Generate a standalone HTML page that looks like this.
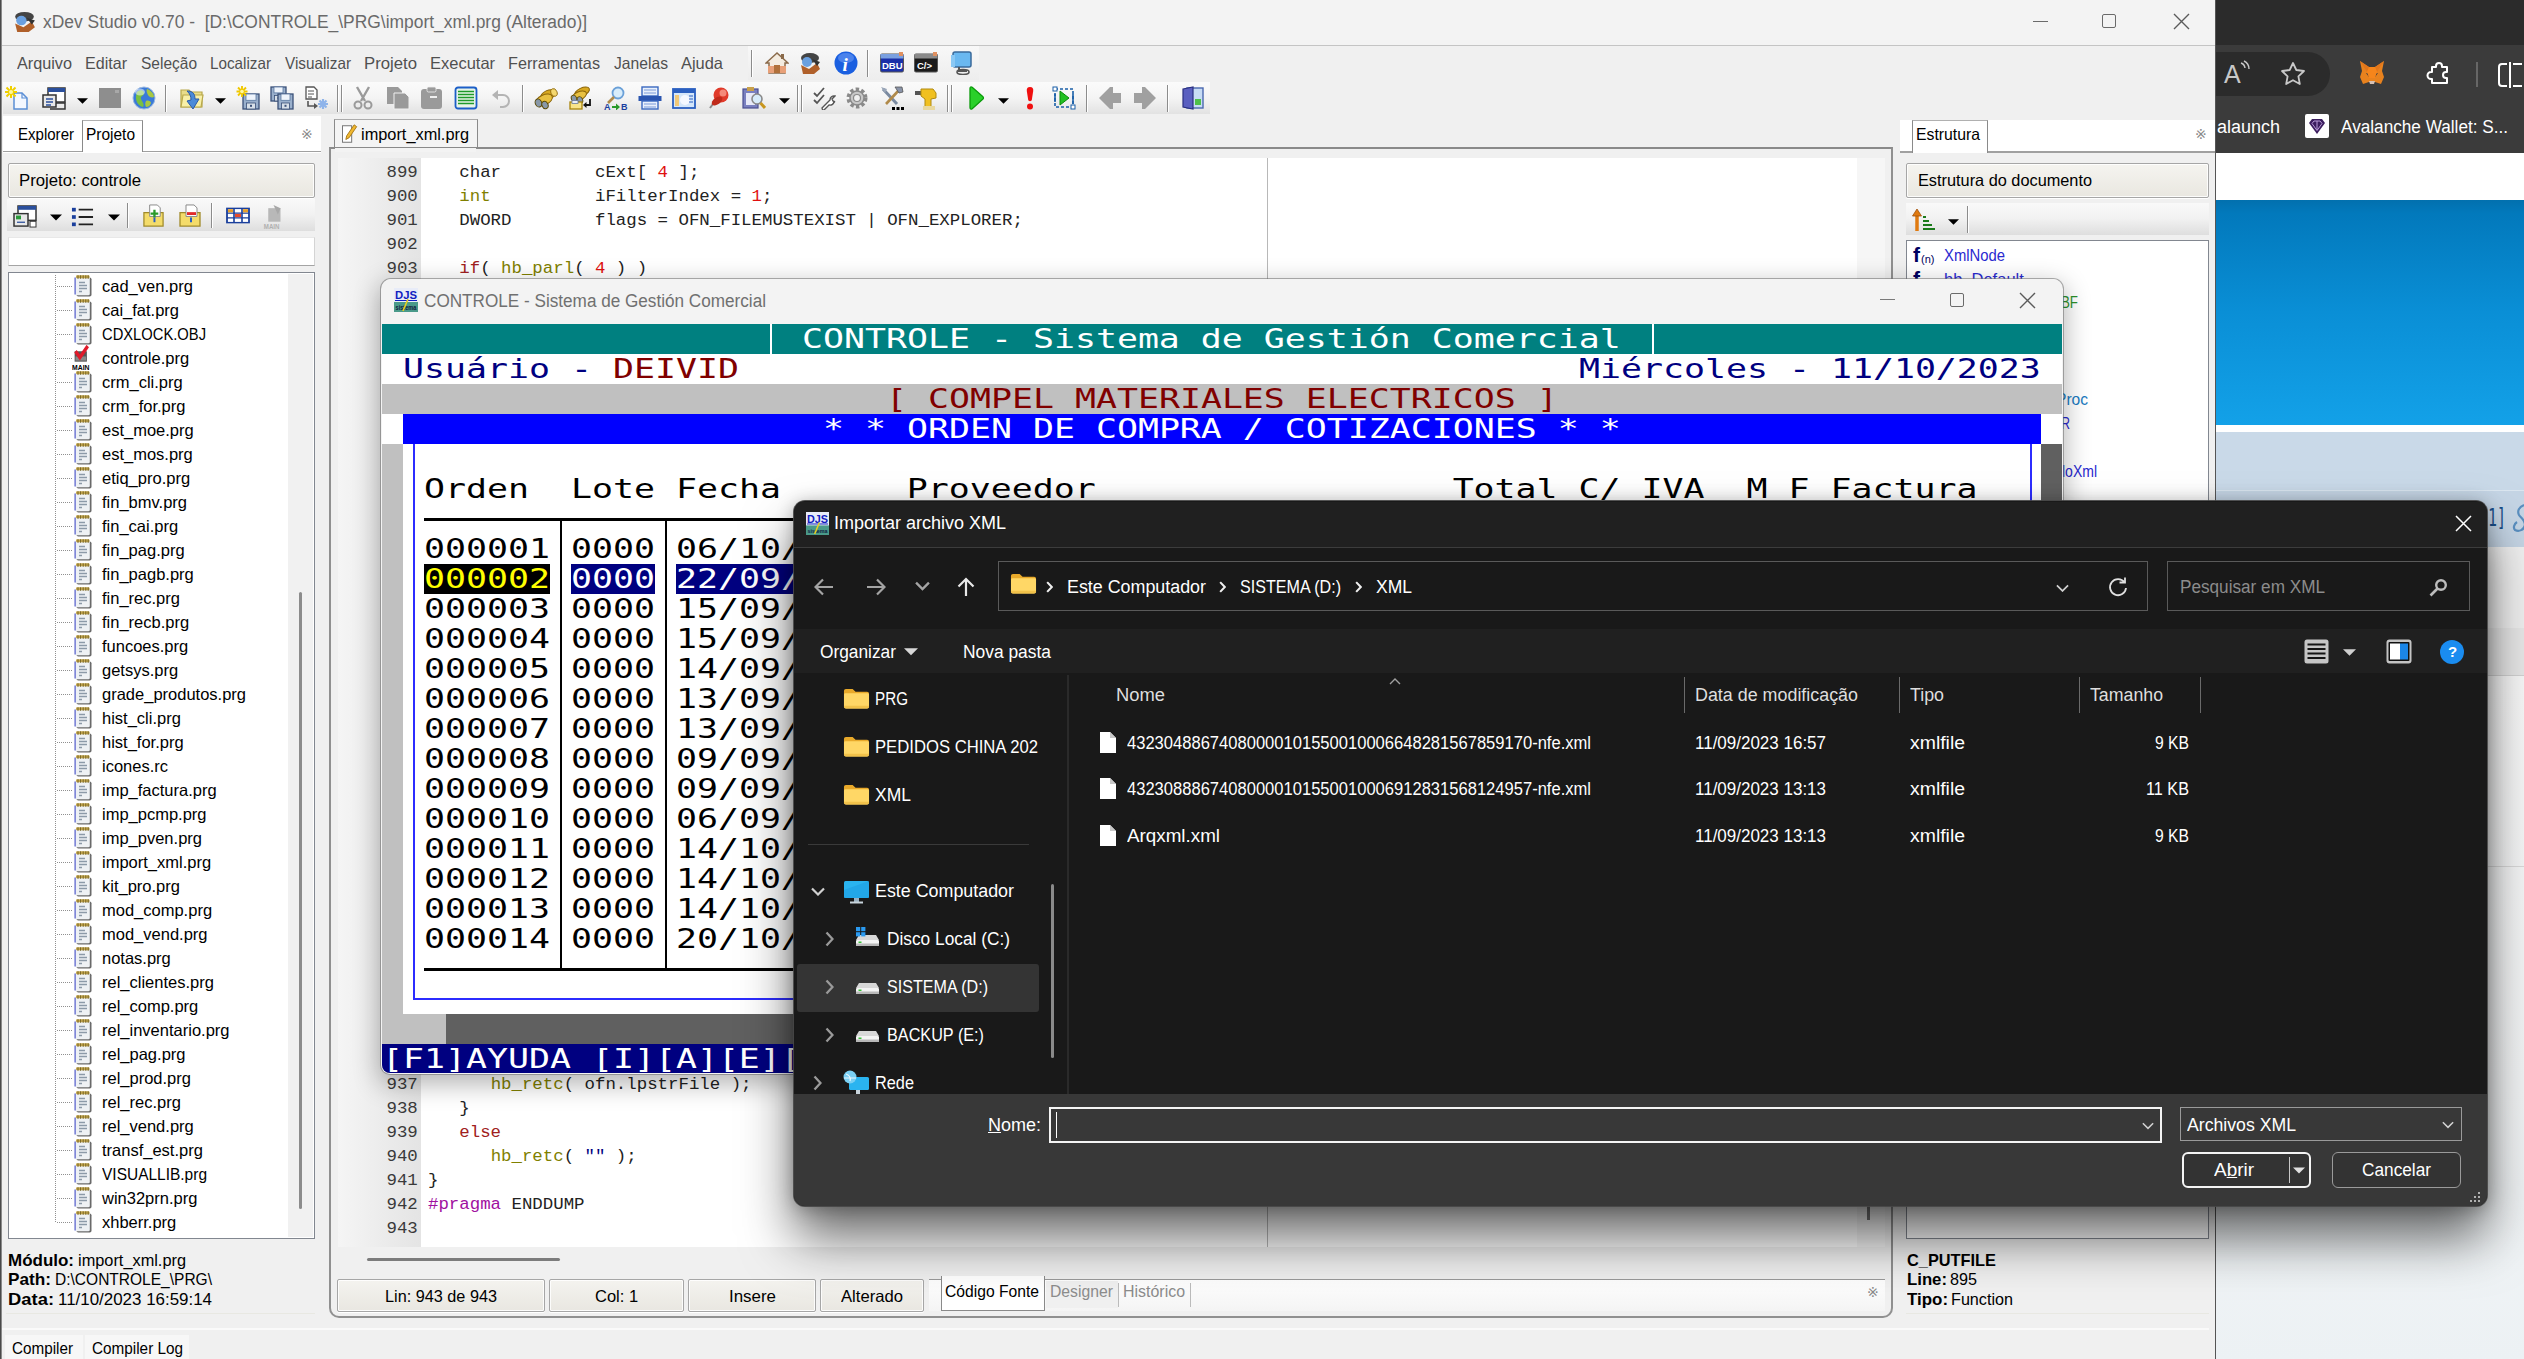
<!DOCTYPE html>
<html lang="pt"><head><meta charset="utf-8"><title>xDev Studio</title>
<style>
html,body{margin:0;padding:0;}
body{width:2524px;height:1359px;position:relative;overflow:hidden;background:#f0f0f0;}
div,span.t,svg.a{position:absolute;}
.t{white-space:nowrap;transform-origin:0 50%;}
.c{font:27.4px/30px "DejaVu Sans Mono",monospace;white-space:pre;transform-origin:0 0;height:30px;}
</style></head>
<body>
<div style="left:2216px;top:0px;width:308px;height:45px;background:#2b2b2b;"></div>
<div style="left:2216px;top:45px;width:308px;height:108px;background:#3b3b3b;"></div>
<div style="left:2176px;top:52px;width:154px;height:44px;background:#2b2b2b;border-radius:22px;"></div>
<div style="left:2216px;top:153px;width:308px;height:47px;background:#fff;"></div>
<div style="left:2216px;top:200px;width:308px;height:225px;background:linear-gradient(#0270ae 0%,#0279bc 6%,#0a8fd6 50%,#13a1e8 100%);"></div>
<div style="left:2216px;top:425px;width:308px;height:7px;background:#fff;"></div>
<div style="left:2216px;top:432px;width:308px;height:58px;background:#c9d9e8;"></div>
<div style="left:2216px;top:490px;width:308px;height:1px;background:#dbe6f0;"></div>
<div style="left:2216px;top:491px;width:308px;height:56px;background:#c5d5e5;"></div>
<div style="left:2216px;top:547px;width:308px;height:81px;background:#f1f1f1;"></div>
<div style="left:2216px;top:628px;width:308px;height:47px;background:#e9e9e9;"></div>
<div style="left:2216px;top:675px;width:308px;height:1px;background:#d4d4d4;"></div>
<div style="left:2216px;top:676px;width:308px;height:684px;background:linear-gradient(#fafafa 0%,#f4f6f7 60%,#ecf1f4 100%);"></div>
<div style="left:2216px;top:866px;width:308px;height:1px;background:#dcdcdc;"></div>
<span class="t" style="left:2224px;top:58.0px;font:25px/32px 'Liberation Sans',sans-serif;color:#c8c8c8;">A</span>
<svg class="a" style="left:2240px;top:60px" width="12" height="14" viewBox="0 0 12 14"><path d="M1 3a6 6 0 0 1 4 5M4 1a9 9 0 0 1 5 8" stroke="#c8c8c8" stroke-width="1.4" fill="none"/></svg>
<svg class="a" style="left:2279px;top:60px" width="28" height="28" viewBox="0 0 28 28"><path d="M14 3l3.3 7 7.7 1-5.6 5.3 1.4 7.7-6.8-3.8-6.8 3.8 1.4-7.700-5.600-5.300 7.700-1z" stroke="#c8c8c8" stroke-width="1.8" fill="none" stroke-linejoin="round"/></svg>
<svg class="a" style="left:2358px;top:60px" width="28" height="27" viewBox="0 0 28 27"><path d="M2 1l9 6h6l9-6-2 10 2 6-3 7-6-2h-6l-6 2-3-7 2-6z" fill="#e8821e"/><path d="M8 13l4 1-1 3zM20 13l-4 1 1 3z" fill="#233447"/><path d="M11 21h6l-1 3h-4z" fill="#d6c0b3"/><path d="M2 1l9 6-2 5zM26 1l-9 6 2 5z" fill="#e2761b"/><path d="M9 12l2-5h6l2 5-2 6h-6z" fill="#f6851b"/></svg>
<svg class="a" style="left:2425px;top:60px" width="28" height="28" viewBox="0 0 28 28"><path d="M11 6a3 3 0 0 1 6 0v1h5v5h-1a3 3 0 0 0 0 6h1v5h-15v-4h-1a3.500 3.500 0 0 1 0-7h1v-5h4z" stroke="#fff" stroke-width="2" fill="none" stroke-linejoin="round"/></svg>
<div style="left:2476px;top:62px;width:2px;height:25px;background:#666;"></div>
<svg class="a" style="left:2497px;top:62px" width="28" height="26" viewBox="0 0 28 26"><path d="M10 2h-5a3 3 0 0 0-3 3v16a3 3 0 0 0 3 3h5M16 2h9M16 24h9" stroke="#fff" stroke-width="2" fill="none"/><path d="M13 0v26" stroke="#fff" stroke-width="2"/></svg>
<span class="t" style="left:2217px;top:115.5px;font:18px/23px 'Liberation Sans',sans-serif;color:#fff;">alaunch</span>
<div style="left:2305px;top:114px;width:24px;height:24px;background:#fff;border-radius:2px;"></div>
<svg class="a" style="left:2308px;top:117px" width="18" height="18" viewBox="0 0 18 18"><path d="M4 2h10l3 4-8 11-8-11z" fill="#3b1d5e"/><path d="M6 4h6l2 2.500-5 7-5-7z" fill="none" stroke="#b79ad6" stroke-width="1"/><path d="M9 4v9" stroke="#b79ad6" stroke-width="1"/></svg>
<span class="t" style="left:2341px;top:115.5px;font:18px/23px 'Liberation Sans',sans-serif;color:#fff;transform:scaleX(0.9538);">Avalanche Wallet: S...</span>
<span class="t" style="left:2488px;top:502.5px;font:24px/31px 'DejaVu Sans Mono',monospace;color:#1a4f8a;transform:scaleX(0.6229);">1]</span>
<svg class="a" style="left:2512px;top:503px" width="14" height="32" viewBox="0 0 14 32"><path d="M12 2c-5 2-7 6-5 10 2 3 6 5 6 10-1 5-6 7-10 5 -2-2-1-6 2-8" stroke="#5a8fc0" stroke-width="2.200" fill="none"/></svg>
<div style="left:0px;top:0px;width:2216px;height:1359px;background:#f0f0f0;"></div>
<div style="left:0px;top:0px;width:2216px;height:45px;background:#f3f3f3;"></div>
<div style="left:0px;top:45px;width:2216px;height:1px;background:#c4c4c4;"></div>
<div style="left:0px;top:0px;width:2px;height:1359px;background:linear-gradient(90deg,#4a4a4a 0 1px,#8a8a8a 1px 2px);"></div>
<div style="left:2215px;top:0px;width:1px;height:1359px;background:#555;"></div>
<svg class="a" style="left:12px;top:10px" width="25" height="23" viewBox="0 0 24 24" preserveAspectRatio="none"><ellipse cx="12" cy="7" rx="9" ry="5" fill="#444"/><circle cx="9" cy="11" r="5" fill="#6aa0e0"/><path d="M3 14l8 4 8-6 3 6-6 5H5z" fill="#b0602a"/><path d="M14 8l8 3-3 4z" fill="#333"/></svg>
<span class="t" style="left:43px;top:10.5px;font:18px/23px 'Liberation Sans',sans-serif;color:#6a6a6a;transform:scaleX(0.9677);white-space:pre;">xDev Studio v0.70 -  [D:\CONTROLE_\PRG\import_xml.prg (Alterado)]</span>
<div style="left:2033px;top:21px;width:15px;height:1px;background:#6a6a6a;"></div>
<div style="left:2102px;top:14px;width:14px;height:14px;box-sizing:border-box;border:1.4px solid #6a6a6a;border-radius:2px;"></div>
<svg class="a" style="left:2173px;top:13px" width="17" height="17" viewBox="0 0 17 17" preserveAspectRatio="none"><path d="M1 1l15 15M16 1L1 16" stroke="#5a5a5a" stroke-width="1.400"/></svg>
<span class="t" style="left:17px;top:52.5px;font:16.5px/21px 'Liberation Sans',sans-serif;color:#505050;transform:scaleX(0.9831);">Arquivo</span>
<span class="t" style="left:85px;top:52.5px;font:16.5px/21px 'Liberation Sans',sans-serif;color:#505050;transform:scaleX(0.9745);">Editar</span>
<span class="t" style="left:141px;top:52.5px;font:16.5px/21px 'Liberation Sans',sans-serif;color:#505050;transform:scaleX(0.9392);">Seleção</span>
<span class="t" style="left:210px;top:52.5px;font:16.5px/21px 'Liberation Sans',sans-serif;color:#505050;transform:scaleX(0.9238);">Localizar</span>
<span class="t" style="left:285px;top:52.5px;font:16.5px/21px 'Liberation Sans',sans-serif;color:#505050;transform:scaleX(0.9266);">Visualizar</span>
<span class="t" style="left:364px;top:52.5px;font:16.5px/21px 'Liberation Sans',sans-serif;color:#505050;transform:scaleX(1.0138);">Projeto</span>
<span class="t" style="left:430px;top:52.5px;font:16.5px/21px 'Liberation Sans',sans-serif;color:#505050;">Executar</span>
<span class="t" style="left:508px;top:52.5px;font:16.5px/21px 'Liberation Sans',sans-serif;color:#505050;transform:scaleX(0.9837);">Ferramentas</span>
<span class="t" style="left:614px;top:52.5px;font:16.5px/21px 'Liberation Sans',sans-serif;color:#505050;transform:scaleX(0.9496);">Janelas</span>
<span class="t" style="left:681px;top:52.5px;font:16.5px/21px 'Liberation Sans',sans-serif;color:#505050;transform:scaleX(0.9953);">Ajuda</span>
<div style="left:748px;top:46px;width:231px;height:34px;background:linear-gradient(#f8f8f8,#ededed);"></div>
<div style="left:751px;top:50px;width:1px;height:27px;background:#8c8c8c;"></div>
<div style="left:752px;top:50px;width:1px;height:27px;background:#fff;"></div>
<svg class="a" style="left:765px;top:51px" width="24" height="24" viewBox="0 0 24 24" preserveAspectRatio="none"><path d="M12 2L1 12h3v10h16V12h3z" fill="#f4ece0" stroke="#8a6a4a" stroke-width="1.500"/><rect x="3" y="15" width="18" height="7" fill="#e8a078"/><path d="M9 22v-8h6v8" fill="#b0703a"/><rect x="16" y="3" width="3" height="5" fill="#8a6a4a"/></svg>
<svg class="a" style="left:798px;top:51px" width="24" height="24" viewBox="0 0 24 24" preserveAspectRatio="none"><ellipse cx="12" cy="7" rx="9" ry="5" fill="#444"/><circle cx="9" cy="11" r="5" fill="#6aa0e0"/><path d="M3 14l8 4 8-6 3 6-6 5H5z" fill="#b0602a"/><path d="M14 8l8 3-3 4z" fill="#333"/></svg>
<svg class="a" style="left:834px;top:51px" width="24" height="24" viewBox="0 0 24 24" preserveAspectRatio="none"><circle cx="12" cy="12" r="11.500" fill="#1a5fe0"/><ellipse cx="12" cy="7" rx="8" ry="5" fill="#6a9af4" opacity=".6"/><text x="8.500" y="19.500" font-family="Liberation Serif,serif" font-style="italic" font-weight="bold" font-size="19" fill="#fff">i</text></svg>
<div style="left:867px;top:50px;width:1px;height:27px;background:#8c8c8c;"></div>
<div style="left:868px;top:50px;width:1px;height:27px;background:#fff;"></div>
<svg class="a" style="left:880px;top:51px" width="24" height="24" viewBox="0 0 24 24" preserveAspectRatio="none"><rect x="0.500" y="3" width="23" height="18" rx="1.500" fill="#1a2fa8" stroke="#555" stroke-width="1"/><rect x="0.500" y="3" width="23" height="4.500" fill="#7aa0e0"/><rect x="19" y="1" width="4" height="4" fill="#e09060"/><text x="2" y="18" font-family="Liberation Sans,sans-serif" font-weight="bold" font-size="9.500" fill="#fff">DBU</text></svg>
<svg class="a" style="left:914px;top:51px" width="24" height="24" viewBox="0 0 24 24" preserveAspectRatio="none"><rect x="0.500" y="3" width="23" height="18" rx="1.500" fill="#1a1a1a" stroke="#555" stroke-width="1"/><rect x="0.500" y="3" width="23" height="4.500" fill="#8a8a8a"/><rect x="19" y="1" width="4" height="4" fill="#e09060"/><text x="3" y="18" font-family="Liberation Sans,sans-serif" font-weight="bold" font-size="9.500" fill="#fff">C/&gt;</text></svg>
<svg class="a" style="left:950px;top:51px" width="24" height="24" viewBox="0 0 24 24" preserveAspectRatio="none"><rect x="3" y="1" width="18" height="15" rx="2" fill="#6ab8f0" stroke="#3a6a9a" stroke-width="1.500"/><rect x="1" y="4" width="4" height="12" fill="#8ac8f4"/><path d="M9 16v4h8" fill="none" stroke="#555" stroke-width="2"/><ellipse cx="13" cy="21" rx="6" ry="2.500" fill="none" stroke="#555" stroke-width="1.600"/></svg>
<div style="left:3px;top:82px;width:1207px;height:32px;background:linear-gradient(#fbfbfb,#f4f4f4 50%,#e2e2e2);"></div>
<svg class="a" style="left:5px;top:86px" width="24" height="24" viewBox="0 0 24 24" preserveAspectRatio="none"><path d="M9 7h8l5 5v11H9z" fill="#f4f8ff" stroke="#5b8fd5" stroke-width="1.500"/><path d="M17 7v5h5" fill="none" stroke="#5b8fd5" stroke-width="1.200"/><path d="M6 0v12M0 6h12M1.500 1.500l9 9M10.500 1.500l-9 9" stroke="#f0d000" stroke-width="2"/><circle cx="6" cy="6" r="2" fill="#fff8a0"/></svg>
<svg class="a" style="left:42px;top:86px" width="24" height="24" viewBox="0 0 24 24" preserveAspectRatio="none"><rect x="6" y="2" width="17" height="14" fill="#fff" stroke="#333" stroke-width="1.5"/><rect x="6" y="2" width="17" height="4" fill="#2a4f9c"/><rect x="1" y="9" width="13" height="12" fill="#e8e8e8" stroke="#333" stroke-width="1.5"/><path d="M4 13h7M4 16h7M4 19h5" stroke="#2a4f9c" stroke-width="1.3"/><path d="M14 17h9v6H8" fill="none" stroke="#333" stroke-width="1.5"/></svg>
<svg class="a" style="left:98px;top:86px" width="24" height="24" viewBox="0 0 24 24" preserveAspectRatio="none"><rect x="1" y="2" width="22" height="20" fill="#8e8e8e"/><rect x="17" y="4" width="4" height="3" fill="#a8a8a8"/></svg>
<svg class="a" style="left:132px;top:86px" width="24" height="24" viewBox="0 0 24 24" preserveAspectRatio="none"><circle cx="12" cy="12" r="11" fill="#3a7ad8"/><circle cx="12" cy="12" r="11" fill="none" stroke="#9ab8e0" stroke-width="1"/><path d="M5 6c3-3 7-2 7 1s-4 3-3 6 4 5 2 8c-5-1-9-7-6-15z" fill="#7ac040"/><path d="M15 3c3 1 7 4 7 8-2 1-5 0-6-2s-2-4-1-6zM14 15c2-1 5 0 5 2-1 3-3 4-5 4-1-2-1-4 0-6z" fill="#a8c840"/><ellipse cx="8" cy="6" rx="5" ry="3.500" fill="#fff" opacity=".5"/></svg>
<svg class="a" style="left:180px;top:86px" width="24" height="24" viewBox="0 0 24 24" preserveAspectRatio="none"><path d="M1 4h8l2 2h11v15H1z" fill="#e8dc8a" stroke="#b8a84a" stroke-width="1.200"/><path d="M3 9h20l-2 12H1z" fill="#f8f0a8" stroke="#b8a84a" stroke-width="1.200"/><path d="M7 5c6 0 8 3 8 8h4l-6 10-6-8 4-1c0-4-1-6-4-9z" fill="#4a8ad8" stroke="#2a5aa8" stroke-width="1"/></svg>
<svg class="a" style="left:236px;top:86px" width="24" height="24" viewBox="0 0 24 24" preserveAspectRatio="none"><rect x="7" y="8" width="16" height="15" fill="#9ab0cc" stroke="#3a5078" stroke-width="1.300"/><rect x="10" y="8" width="10" height="6.3" fill="#eef4fc" stroke="#5a78a0" stroke-width=".8"/><rect x="10.5" y="17.0" width="9" height="6.0" fill="#d8e0e8" stroke="#3a5078" stroke-width=".8"/><rect x="14.0" y="18.799999999999997" width="2" height="2" fill="#3a5078"/><path d="M6 0v11M0.500 5.500h11M2 1.500l8 8M10 1.500l-8 8" stroke="#f0c800" stroke-width="1.900"/><circle cx="6" cy="5.500" r="1.800" fill="#fff8a0"/></svg>
<svg class="a" style="left:270px;top:86px" width="24" height="24" viewBox="0 0 24 24" preserveAspectRatio="none"><rect x="1" y="1" width="15" height="14" fill="#9ab0cc" stroke="#3a5078" stroke-width="1.300"/><rect x="4" y="1" width="9" height="5.88" fill="#eef4fc" stroke="#5a78a0" stroke-width=".8"/><rect x="4.5" y="9.4" width="8" height="5.6000000000000005" fill="#d8e0e8" stroke="#3a5078" stroke-width=".8"/><rect x="7.5" y="11.08" width="2" height="2" fill="#3a5078"/><rect x="8" y="8" width="15" height="15" fill="#9ab0cc" stroke="#3a5078" stroke-width="1.300"/><rect x="11" y="8" width="9" height="6.3" fill="#eef4fc" stroke="#5a78a0" stroke-width=".8"/><rect x="11.5" y="17.0" width="8" height="6.0" fill="#d8e0e8" stroke="#3a5078" stroke-width=".8"/><rect x="14.5" y="18.799999999999997" width="2" height="2" fill="#3a5078"/></svg>
<svg class="a" style="left:304px;top:86px" width="24" height="24" viewBox="0 0 24 24" preserveAspectRatio="none"><path d="M2 1h8l3 3v9H2z" fill="#fff" stroke="#555" stroke-width="1.3"/><path d="M4 5h6M4 8h6M4 11h4" stroke="#555" stroke-width="1"/><path d="M4 15v5h7" fill="none" stroke="#555" stroke-width="1.6"/><path d="M10 17l4 3-4 3z" fill="#555"/><path d="M19 13v10M14 18h10M15.500 14.500l7 7M22.500 14.500l-7 7" stroke="#8fb4ea" stroke-width="2.2"/></svg>
<svg class="a" style="left:351px;top:86px" width="24" height="24" viewBox="0 0 24 24" preserveAspectRatio="none"><path d="M6 1l8 14M18 1l-8 14" stroke="#9a9a9a" stroke-width="2.4"/><circle cx="7" cy="19" r="3.500" fill="none" stroke="#9a9a9a" stroke-width="2"/><circle cx="17" cy="19" r="3.500" fill="none" stroke="#9a9a9a" stroke-width="2"/></svg>
<svg class="a" style="left:386px;top:86px" width="24" height="24" viewBox="0 0 24 24" preserveAspectRatio="none"><path d="M1 1h11l4 4v13H1z" fill="#9a9a9a"/><path d="M8 7h11l4 4v12H8z" fill="#9a9a9a" stroke="#f0f0f0" stroke-width="1"/></svg>
<svg class="a" style="left:420px;top:86px" width="24" height="24" viewBox="0 0 24 24" preserveAspectRatio="none"><rect x="1" y="3" width="21" height="20" rx="3" fill="#9a9a9a"/><rect x="7" y="1" width="9" height="5" rx="1.500" fill="#9a9a9a" stroke="#f0f0f0" stroke-width=".8"/><path d="M10 11h7" stroke="#f0f0f0" stroke-width="2"/></svg>
<svg class="a" style="left:454px;top:86px" width="24" height="24" viewBox="0 0 24 24" preserveAspectRatio="none"><rect x="1.500" y="1.500" width="21" height="21" rx="2.500" fill="#e8f4e8" stroke="#1c5fc8" stroke-width="1.800"/><path d="M4 5.500h16M4 8.500h16M4 11.500h16M4 14.500h16M4 17.500h16" stroke="#1f9a2a" stroke-width="1.700"/></svg>
<svg class="a" style="left:489px;top:86px" width="24" height="24" viewBox="0 0 24 24" preserveAspectRatio="none"><path d="M5 9h9a6 6 0 0 1 0 12h-3" fill="none" stroke="#b4b4b4" stroke-width="2"/><path d="M9 4L3 9l6 5z" fill="#b4b4b4"/></svg>
<svg class="a" style="left:534px;top:86px" width="24" height="24" viewBox="0 0 24 24" preserveAspectRatio="none"><ellipse cx="14" cy="9" rx="8" ry="4.500" transform="rotate(-25 14 9)" fill="#d8a820" stroke="#8a6408" stroke-width="1"/><ellipse cx="10" cy="14" rx="9" ry="5" transform="rotate(-25 10 14)" fill="#e8c040" stroke="#8a6408" stroke-width="1"/><ellipse cx="20" cy="6.500" rx="3" ry="4" transform="rotate(-25 20 6.500)" fill="#f4d870" stroke="#8a6408" stroke-width=".8"/><ellipse cx="4.500" cy="17" rx="3.200" ry="4.200" transform="rotate(-25 4.500 17)" fill="#8898a8" stroke="#5a4a08" stroke-width="1"/><ellipse cx="11" cy="19" rx="3" ry="3.800" transform="rotate(-25 11 19)" fill="#8898a8" stroke="#5a4a08" stroke-width="1"/></svg>
<svg class="a" style="left:568px;top:86px" width="24" height="24" viewBox="0 0 24 24" preserveAspectRatio="none"><ellipse cx="14" cy="6" rx="8" ry="4" transform="rotate(-25 14 6)" fill="#d8a820" stroke="#8a6408" stroke-width="1"/><ellipse cx="11" cy="10" rx="8" ry="4.200" transform="rotate(-25 11 10)" fill="#e8c040" stroke="#8a6408" stroke-width="1"/><ellipse cx="6" cy="12.500" rx="2.600" ry="3.400" transform="rotate(-25 6 12.500)" fill="#8898a8" stroke="#5a4a08" stroke-width=".9"/><ellipse cx="12" cy="14" rx="2.600" ry="3.400" transform="rotate(-25 12 14)" fill="#8898a8" stroke="#5a4a08" stroke-width=".9"/><rect x="2" y="16" width="12" height="7" fill="#f8e48a" stroke="#a8840a" stroke-width="1.300"/><rect x="4" y="14.500" width="6" height="3" fill="#e8eef8" stroke="#6a7a9a" stroke-width=".8"/><path d="M22 13v6h-5" fill="none" stroke="#111" stroke-width="1.800"/><path d="M18.500 16l-3.500 3 3.500 3z" fill="#111"/></svg>
<svg class="a" style="left:604px;top:86px" width="24" height="24" viewBox="0 0 24 24" preserveAspectRatio="none"><circle cx="14" cy="7" r="5.500" fill="#d8ecfa" stroke="#6aa0d8" stroke-width="1.800"/><path d="M10 11l-6 6" stroke="#b08a4a" stroke-width="2.600"/><text x="0" y="24" font-family="Liberation Sans,sans-serif" font-weight="bold" font-size="9" fill="#1a3fa0">A</text><text x="17" y="24" font-family="Liberation Sans,sans-serif" font-weight="bold" font-size="9" fill="#1a3fa0">B</text><path d="M8 20h4v-2.500l4 3.500-4 3.500V22H8z" fill="#2a9a2a"/></svg>
<svg class="a" style="left:638px;top:86px" width="24" height="24" viewBox="0 0 24 24" preserveAspectRatio="none"><rect x="4" y="1" width="16" height="9" fill="#e8f0fc" stroke="#3a68c0" stroke-width="1.400"/><path d="M6 4h12M6 7h12" stroke="#7a9ad8" stroke-width="1"/><rect x="0.500" y="10" width="23" height="5" fill="#2a55b0"/><rect x="4" y="15" width="16" height="8" fill="#e8f0fc" stroke="#3a68c0" stroke-width="1.400"/><path d="M6 18h12M6 21h12" stroke="#7a9ad8" stroke-width="1"/></svg>
<svg class="a" style="left:672px;top:86px" width="24" height="24" viewBox="0 0 24 24" preserveAspectRatio="none"><rect x="1" y="3" width="22" height="19" fill="#d4e6fa" stroke="#2a5fc0" stroke-width="1.800"/><rect x="1" y="3" width="22" height="4" fill="#2a5fc0"/><circle cx="13" cy="14" r="5" fill="#f4f8ff"/><rect x="3" y="9" width="4" height="11" fill="#f0c878"/><path d="M17 10h4M17 13h4M17 16h4" stroke="#2a5fc0" stroke-width="1.200"/></svg>
<svg class="a" style="left:707px;top:86px" width="24" height="24" viewBox="0 0 24 24" preserveAspectRatio="none"><circle cx="14" cy="9" r="7.500" fill="#e03a2a"/><circle cx="16" cy="7" r="3.500" fill="#f48a7a"/><path d="M9 14l-6 8" stroke="#8a8a8a" stroke-width="2"/><ellipse cx="10" cy="15" rx="6" ry="3.500" transform="rotate(-35 10 15)" fill="#c02a1a"/></svg>
<svg class="a" style="left:742px;top:86px" width="24" height="24" viewBox="0 0 24 24" preserveAspectRatio="none"><rect x="1" y="3" width="15" height="19" fill="#7a80c0" stroke="#4a4f90" stroke-width="1.200"/><rect x="5" y="1" width="7" height="4" fill="#c8a04a"/><rect x="4" y="7" width="9" height="12" fill="#e8eaf8"/><circle cx="15" cy="13" r="5" fill="#d8ecfa" stroke="#8a8a8a" stroke-width="1.600"/><path d="M18.500 17l4.500 5" stroke="#c8961e" stroke-width="3"/></svg>
<svg class="a" style="left:812px;top:86px" width="24" height="24" viewBox="0 0 24 24" preserveAspectRatio="none"><path d="M2 7l3 3 7-8M2 14l3 3 7-8" fill="none" stroke="#555" stroke-width="1.800"/><path d="M10 22l8-8a4 4 0 0 1 5-4l-3 3 1 2 2 1 -1 0a4 4 0 0 1-5 3l-6 6z" fill="#fff" stroke="#555" stroke-width="1.400"/></svg>
<svg class="a" style="left:845px;top:86px" width="24" height="24" viewBox="0 0 24 24" preserveAspectRatio="none"><circle cx="12" cy="12" r="8.500" fill="none" stroke="#8a8a8a" stroke-width="4" stroke-dasharray="3.300 2.200"/><circle cx="12" cy="12" r="7" fill="#c8c8c8" stroke="#8a8a8a" stroke-width="1.500"/><circle cx="12" cy="12" r="3.500" fill="#f0f0f0" stroke="#8a8a8a" stroke-width="1.200"/></svg>
<svg class="a" style="left:880px;top:86px" width="24" height="24" viewBox="0 0 24 24" preserveAspectRatio="none"><path d="M3 3l14 15" stroke="#7a8aa0" stroke-width="3"/><path d="M1 1l6 2-2 4z" fill="#9aa6b8"/><path d="M20 3L6 18" stroke="#b08a4a" stroke-width="2.600"/><path d="M15 1h7l1 5-4 1z" fill="#8a94a8" stroke="#555" stroke-width=".8"/><rect x="12" y="21" width="3" height="3" fill="#000"/><rect x="16.500" y="21" width="3" height="3" fill="#000"/><rect x="21" y="21" width="3" height="3" fill="#000"/></svg>
<svg class="a" style="left:914px;top:86px" width="24" height="24" viewBox="0 0 24 24" preserveAspectRatio="none"><path d="M1 5h6v4H1z" fill="#555"/><path d="M7 3h12l3 4v5l-5 1v9h-6v-9l-4-3z" fill="#f0c020" stroke="#b08a10" stroke-width="1"/><rect x="9" y="20" width="12" height="4" fill="#e8d8a0"/></svg>
<svg class="a" style="left:964px;top:86px" width="24" height="24" viewBox="0 0 24 24" preserveAspectRatio="none"><path d="M6 2.500c0-1.500 1-2 2.200-1.200l10.500 9.200c1 .8 1 2 0 2.800L8.200 22.700C7 23.500 6 23 6 21.500z" fill="#2ad02a" stroke="#0a9a0a" stroke-width="1.300"/></svg>
<svg class="a" style="left:1018px;top:86px" width="24" height="24" viewBox="0 0 24 24" preserveAspectRatio="none"><path d="M12 1c2.500 0 3.500 1.500 3.200 4l-1.400 9c-.3 1.500-3.300 1.500-3.600 0L8.800 5C8.500 2.500 9.500 1 12 1z" fill="#f01010"/><circle cx="12" cy="20.500" r="3" fill="#f01010"/></svg>
<svg class="a" style="left:1052px;top:86px" width="24" height="24" viewBox="0 0 24 24" preserveAspectRatio="none"><rect x="3" y="3" width="18" height="18" fill="none" stroke="#1a5fa8" stroke-width="1.600" stroke-dasharray="3 2"/><rect x="1" y="1" width="4" height="4" fill="#fff" stroke="#1a5fa8"/><rect x="19" y="19" width="4" height="4" fill="#fff" stroke="#1a5fa8"/><path d="M8 5l9 7-9 7z" fill="#22c022" stroke="#0a8a0a" stroke-width="1"/><path d="M3 8v8M21 8v10" stroke="#1a5fa8" stroke-width="1.600"/></svg>
<svg class="a" style="left:1098px;top:86px" width="24" height="24" viewBox="0 0 24 24" preserveAspectRatio="none"><path d="M1 12L12 1h3v6h8v10h-8v6h-3z" fill="#a0a0a0"/></svg>
<svg class="a" style="left:1133px;top:86px" width="24" height="24" viewBox="0 0 24 24" preserveAspectRatio="none"><path d="M23 12L12 1H9v6H1v10h8v6h3z" fill="#a0a0a0"/></svg>
<svg class="a" style="left:1181px;top:86px" width="24" height="24" viewBox="0 0 24 24" preserveAspectRatio="none"><rect x="6" y="2" width="16" height="20" fill="#c8dcf4" stroke="#4a68b0" stroke-width="1.400"/><rect x="14" y="13" width="6" height="6" fill="#4fc04a"/><path d="M2 3l10-2v22l-10-2z" fill="#5a5fc0" stroke="#2a2f80" stroke-width="1.200"/></svg>
<svg class="a" style="left:77px;top:98px" width="11" height="6" viewBox="0 0 10 5"><path d="M0 0h10l-5 5z" fill="#000"/></svg>
<svg class="a" style="left:215px;top:98px" width="11" height="6" viewBox="0 0 10 5"><path d="M0 0h10l-5 5z" fill="#000"/></svg>
<svg class="a" style="left:779px;top:98px" width="11" height="6" viewBox="0 0 10 5"><path d="M0 0h10l-5 5z" fill="#000"/></svg>
<svg class="a" style="left:998px;top:98px" width="11" height="6" viewBox="0 0 10 5"><path d="M0 0h10l-5 5z" fill="#000"/></svg>
<div style="left:165px;top:85px;width:1px;height:27px;background:#8c8c8c;"></div>
<div style="left:166px;top:85px;width:1px;height:27px;background:#fff;"></div>
<div style="left:522px;top:85px;width:1px;height:27px;background:#8c8c8c;"></div>
<div style="left:523px;top:85px;width:1px;height:27px;background:#fff;"></div>
<div style="left:1086px;top:85px;width:1px;height:27px;background:#8c8c8c;"></div>
<div style="left:1087px;top:85px;width:1px;height:27px;background:#fff;"></div>
<div style="left:1167px;top:85px;width:1px;height:27px;background:#8c8c8c;"></div>
<div style="left:1168px;top:85px;width:1px;height:27px;background:#fff;"></div>
<div style="left:337px;top:85px;width:1px;height:27px;background:#8c8c8c;"></div>
<div style="left:338px;top:85px;width:1px;height:27px;background:#fff;"></div>
<div style="left:341px;top:85px;width:1px;height:27px;background:#8c8c8c;"></div>
<div style="left:342px;top:85px;width:1px;height:27px;background:#fff;"></div>
<div style="left:797px;top:85px;width:1px;height:27px;background:#8c8c8c;"></div>
<div style="left:798px;top:85px;width:1px;height:27px;background:#fff;"></div>
<div style="left:801px;top:85px;width:1px;height:27px;background:#8c8c8c;"></div>
<div style="left:802px;top:85px;width:1px;height:27px;background:#fff;"></div>
<div style="left:947px;top:85px;width:1px;height:27px;background:#8c8c8c;"></div>
<div style="left:948px;top:85px;width:1px;height:27px;background:#fff;"></div>
<div style="left:951px;top:85px;width:1px;height:27px;background:#8c8c8c;"></div>
<div style="left:952px;top:85px;width:1px;height:27px;background:#fff;"></div>
<div style="left:3px;top:116px;width:318px;height:35px;background:#fff;"></div>
<div style="left:3px;top:151px;width:318px;height:2px;background:#a0a0a0;"></div>
<div style="left:82px;top:120px;width:61px;height:33px;background:#fff;box-sizing:border-box;border:1.5px solid #8a8a8a;border-top-color:#b0b0b0;border-bottom:none;"></div>
<div style="left:84px;top:150px;width:58px;height:3px;background:#fff;"></div>
<div style="left:3px;top:152px;width:318px;height:1px;background:#fff;"></div>
<span class="t" style="left:18px;top:123.5px;font:16.5px/21px 'Liberation Sans',sans-serif;color:#000;transform:scaleX(0.9115);">Explorer</span>
<span class="t" style="left:86px;top:123.5px;font:16.5px/21px 'Liberation Sans',sans-serif;color:#000;transform:scaleX(0.9373);">Projeto</span>
<span class="t" style="left:301px;top:125.0px;font:14px/18px 'DejaVu Sans',sans-serif;color:#8a8a8a;">※</span>
<div style="left:8px;top:163px;width:307px;height:35px;background:linear-gradient(#f5f4f0,#e9e7e0);box-sizing:border-box;border:1.5px solid #a6a6a6;border-radius:2px;box-shadow:inset 0 0 0 1px rgba(255,255,255,.85),0 1px 0 #fff;"></div>
<span class="t" style="left:19px;top:169.5px;font:16.5px/21px 'Liberation Sans',sans-serif;color:#000;transform:scaleX(1.0155);">Projeto: controle</span>
<div style="left:7px;top:199px;width:308px;height:32px;background:linear-gradient(#f9f9f9,#f1f1f1 50%,#dedede);"></div>
<svg class="a" style="left:13px;top:205px" width="24" height="23" viewBox="0 0 24 24" preserveAspectRatio="none"><rect x="5" y="1" width="18" height="15" fill="#fff" stroke="#333" stroke-width="1.500"/><rect x="5" y="1" width="18" height="4" fill="#2a4f9c"/><rect x="1" y="9" width="14" height="13" fill="#e8e8e8" stroke="#333" stroke-width="1.500"/><rect x="3" y="11" width="5" height="4" fill="#2a9a3a"/><path d="M4 18h8" stroke="#2a4f9c" stroke-width="1.300"/><rect x="17" y="17" width="6" height="6" fill="#fff" stroke="#333"/></svg>
<svg class="a" style="left:71px;top:206px" width="23" height="22" viewBox="0 0 24 24" preserveAspectRatio="none"><rect x="1" y="2" width="4" height="4" fill="#1a3f9c"/><rect x="1" y="10" width="4" height="4" fill="#1a3f9c"/><rect x="1" y="18" width="4" height="4" fill="#1a3f9c"/><path d="M8 4h15M8 12h15M8 20h15" stroke="#222" stroke-width="2"/></svg>
<svg class="a" style="left:142px;top:204px" width="23" height="23" viewBox="0 0 24 24" preserveAspectRatio="none"><path d="M2 9h7l2-3h5v3h6v14H2z" fill="#f4dc6a" stroke="#a08a2a" stroke-width="1.300"/><path d="M8 1h8l3 3v9H8z" fill="#fff" stroke="#888" stroke-width="1"/><path d="M13 6v8M9 10h8" stroke="#2a9a2a" stroke-width="2.400"/><path d="M13 14v5" stroke="#2a5fc0" stroke-width="2"/></svg>
<svg class="a" style="left:178px;top:204px" width="24" height="23" viewBox="0 0 24 24" preserveAspectRatio="none"><path d="M2 9h7l2-3h5v3h6v14H2z" fill="#f4dc6a" stroke="#a08a2a" stroke-width="1.300"/><path d="M8 1h8l3 3v9H8z" fill="#fff" stroke="#888" stroke-width="1"/><path d="M9 10h9" stroke="#e02a2a" stroke-width="3"/><path d="M13 14v5" stroke="#2a5fc0" stroke-width="2"/></svg>
<svg class="a" style="left:226px;top:206px" width="24" height="19" viewBox="0 0 24 24" preserveAspectRatio="none"><rect x="1" y="3" width="22" height="18" fill="#fff" stroke="#1a3f9c" stroke-width="1.800"/><path d="M1 9h22M1 15h22M8 3v18M16 3v18" stroke="#1a3f9c" stroke-width="1.600"/><rect x="9" y="10" width="6" height="4" fill="#e84a2a"/><rect x="2" y="4" width="5" height="4" fill="#e8a02a"/><rect x="17" y="4" width="5" height="4" fill="#e8a02a"/></svg>
<svg class="a" style="left:263px;top:204px" width="21" height="25" viewBox="0 0 24 24" preserveAspectRatio="none"><rect x="6" y="4" width="14" height="13" fill="#b8b8b8"/><path d="M12 1l8 3-3 6z" fill="#a8a8a8"/><text x="1" y="24" font-family="Liberation Sans,sans-serif" font-weight="bold" font-size="7" fill="#b0b0b0">MAIN</text></svg>
<svg class="a" style="left:50px;top:214px" width="12" height="7" viewBox="0 0 10 5"><path d="M0 0h10l-5 5z" fill="#000"/></svg>
<svg class="a" style="left:108px;top:214px" width="12" height="7" viewBox="0 0 10 5"><path d="M0 0h10l-5 5z" fill="#000"/></svg>
<div style="left:127px;top:203px;width:1px;height:25px;background:#8c8c8c;"></div>
<div style="left:128px;top:203px;width:1px;height:25px;background:#fff;"></div>
<div style="left:211px;top:203px;width:1px;height:25px;background:#8c8c8c;"></div>
<div style="left:212px;top:203px;width:1px;height:25px;background:#fff;"></div>
<div style="left:8px;top:237px;width:307px;height:29px;background:#fff;box-sizing:border-box;border:1px solid;border-color:#e8e8e8 #d4d4d4 #a4a4a4 #e0e0e0;"></div>
<div style="left:8px;top:272px;width:307px;height:967px;background:#fff;box-sizing:border-box;border:1px solid #828790;"></div>
<div style="left:288px;top:274px;width:25px;height:963px;background:#f1f1f1;"></div>
<div style="left:299px;top:592px;width:3px;height:617px;background:#8c8c8c;border-radius:2px;"></div>
<div style="left:55px;top:274px;width:1px;height:949px;background:repeating-linear-gradient(#fff 0 1px,#909090 1px 2px);"></div>
<div style="left:56px;top:286px;width:17px;height:1px;background:repeating-linear-gradient(90deg,#fff 0 1px,#909090 1px 2px);"></div>
<svg class="a" style="left:74px;top:275px" width="18" height="22" viewBox="0 0 18 22" preserveAspectRatio="none"><rect x="2.500" y="2.500" width="15" height="19" rx="1.800" fill="#6a6a6a"/><rect x="1" y="1.500" width="14.800" height="18.800" rx="1.500" fill="#eef1f4"/><rect x="0.300" y="2.500" width="1.700" height="17" fill="#8088d8"/><rect x="2" y="0.300" width="13.500" height="3" rx="1" fill="#c8aa50"/><path d="M4 0.300v3.500M6.600 0.300v3.500M9.200 0.300v3.500M11.800 0.300v3.500M14.200 0.300v3.500" stroke="#6a5a20" stroke-width=".9"/><path d="M5 7.500h6M5 10.500h8M5 13.500h8M5 16.500h3" stroke="#8c9aa8" stroke-width="1.400"/></svg>
<span class="t" style="left:102px;top:275.5px;font:16.5px/21px 'Liberation Sans',sans-serif;color:#000;">cad_ven.prg</span>
<div style="left:56px;top:310px;width:17px;height:1px;background:repeating-linear-gradient(90deg,#fff 0 1px,#909090 1px 2px);"></div>
<svg class="a" style="left:74px;top:299px" width="18" height="22" viewBox="0 0 18 22" preserveAspectRatio="none"><rect x="2.500" y="2.500" width="15" height="19" rx="1.800" fill="#6a6a6a"/><rect x="1" y="1.500" width="14.800" height="18.800" rx="1.500" fill="#eef1f4"/><rect x="0.300" y="2.500" width="1.700" height="17" fill="#8088d8"/><rect x="2" y="0.300" width="13.500" height="3" rx="1" fill="#c8aa50"/><path d="M4 0.300v3.500M6.600 0.300v3.500M9.200 0.300v3.500M11.800 0.300v3.500M14.200 0.300v3.500" stroke="#6a5a20" stroke-width=".9"/><path d="M5 7.500h6M5 10.500h8M5 13.500h8M5 16.500h3" stroke="#8c9aa8" stroke-width="1.400"/></svg>
<span class="t" style="left:102px;top:299.5px;font:16.5px/21px 'Liberation Sans',sans-serif;color:#000;">cai_fat.prg</span>
<div style="left:56px;top:334px;width:17px;height:1px;background:repeating-linear-gradient(90deg,#fff 0 1px,#909090 1px 2px);"></div>
<svg class="a" style="left:74px;top:323px" width="18" height="22" viewBox="0 0 18 22" preserveAspectRatio="none"><rect x="2.500" y="2.500" width="15" height="19" rx="1.800" fill="#6a6a6a"/><rect x="1" y="1.500" width="14.800" height="18.800" rx="1.500" fill="#eef1f4"/><rect x="0.300" y="2.500" width="1.700" height="17" fill="#8088d8"/><rect x="2" y="0.300" width="13.500" height="3" rx="1" fill="#c8aa50"/><path d="M4 0.300v3.500M6.600 0.300v3.500M9.200 0.300v3.500M11.800 0.300v3.500M14.200 0.300v3.500" stroke="#6a5a20" stroke-width=".9"/><path d="M5 7.500h6M5 10.500h8M5 13.500h8M5 16.500h3" stroke="#8c9aa8" stroke-width="1.400"/></svg>
<span class="t" style="left:102px;top:323.5px;font:16.5px/21px 'Liberation Sans',sans-serif;color:#000;transform:scaleX(0.8931);">CDXLOCK.OBJ</span>
<div style="left:56px;top:358px;width:17px;height:1px;background:repeating-linear-gradient(90deg,#fff 0 1px,#909090 1px 2px);"></div>
<svg class="a" style="left:72px;top:345px" width="21" height="25" viewBox="0 0 24 24" preserveAspectRatio="none"><rect x="3" y="6" width="14" height="10" fill="#555"/><rect x="4" y="11" width="12" height="4" fill="#888"/><path d="M4 6l5 6 9-11" fill="none" stroke="#e01a2a" stroke-width="3.600"/><text x="0" y="24" font-family="Liberation Sans,sans-serif" font-weight="bold" font-size="7.500" fill="#000" textLength="20" lengthAdjust="spacingAndGlyphs">MAIN</text></svg>
<span class="t" style="left:102px;top:347.5px;font:16.5px/21px 'Liberation Sans',sans-serif;color:#000;">controle.prg</span>
<div style="left:56px;top:382px;width:17px;height:1px;background:repeating-linear-gradient(90deg,#fff 0 1px,#909090 1px 2px);"></div>
<svg class="a" style="left:74px;top:371px" width="18" height="22" viewBox="0 0 18 22" preserveAspectRatio="none"><rect x="2.500" y="2.500" width="15" height="19" rx="1.800" fill="#6a6a6a"/><rect x="1" y="1.500" width="14.800" height="18.800" rx="1.500" fill="#eef1f4"/><rect x="0.300" y="2.500" width="1.700" height="17" fill="#8088d8"/><rect x="2" y="0.300" width="13.500" height="3" rx="1" fill="#c8aa50"/><path d="M4 0.300v3.500M6.600 0.300v3.500M9.200 0.300v3.500M11.800 0.300v3.500M14.200 0.300v3.500" stroke="#6a5a20" stroke-width=".9"/><path d="M5 7.500h6M5 10.500h8M5 13.500h8M5 16.500h3" stroke="#8c9aa8" stroke-width="1.400"/></svg>
<span class="t" style="left:102px;top:371.5px;font:16.5px/21px 'Liberation Sans',sans-serif;color:#000;">crm_cli.prg</span>
<div style="left:56px;top:406px;width:17px;height:1px;background:repeating-linear-gradient(90deg,#fff 0 1px,#909090 1px 2px);"></div>
<svg class="a" style="left:74px;top:395px" width="18" height="22" viewBox="0 0 18 22" preserveAspectRatio="none"><rect x="2.500" y="2.500" width="15" height="19" rx="1.800" fill="#6a6a6a"/><rect x="1" y="1.500" width="14.800" height="18.800" rx="1.500" fill="#eef1f4"/><rect x="0.300" y="2.500" width="1.700" height="17" fill="#8088d8"/><rect x="2" y="0.300" width="13.500" height="3" rx="1" fill="#c8aa50"/><path d="M4 0.300v3.500M6.600 0.300v3.500M9.200 0.300v3.500M11.800 0.300v3.500M14.200 0.300v3.500" stroke="#6a5a20" stroke-width=".9"/><path d="M5 7.500h6M5 10.500h8M5 13.500h8M5 16.500h3" stroke="#8c9aa8" stroke-width="1.400"/></svg>
<span class="t" style="left:102px;top:395.5px;font:16.5px/21px 'Liberation Sans',sans-serif;color:#000;">crm_for.prg</span>
<div style="left:56px;top:430px;width:17px;height:1px;background:repeating-linear-gradient(90deg,#fff 0 1px,#909090 1px 2px);"></div>
<svg class="a" style="left:74px;top:419px" width="18" height="22" viewBox="0 0 18 22" preserveAspectRatio="none"><rect x="2.500" y="2.500" width="15" height="19" rx="1.800" fill="#6a6a6a"/><rect x="1" y="1.500" width="14.800" height="18.800" rx="1.500" fill="#eef1f4"/><rect x="0.300" y="2.500" width="1.700" height="17" fill="#8088d8"/><rect x="2" y="0.300" width="13.500" height="3" rx="1" fill="#c8aa50"/><path d="M4 0.300v3.500M6.600 0.300v3.500M9.200 0.300v3.500M11.800 0.300v3.500M14.200 0.300v3.500" stroke="#6a5a20" stroke-width=".9"/><path d="M5 7.500h6M5 10.500h8M5 13.500h8M5 16.500h3" stroke="#8c9aa8" stroke-width="1.400"/></svg>
<span class="t" style="left:102px;top:419.5px;font:16.5px/21px 'Liberation Sans',sans-serif;color:#000;">est_moe.prg</span>
<div style="left:56px;top:454px;width:17px;height:1px;background:repeating-linear-gradient(90deg,#fff 0 1px,#909090 1px 2px);"></div>
<svg class="a" style="left:74px;top:443px" width="18" height="22" viewBox="0 0 18 22" preserveAspectRatio="none"><rect x="2.500" y="2.500" width="15" height="19" rx="1.800" fill="#6a6a6a"/><rect x="1" y="1.500" width="14.800" height="18.800" rx="1.500" fill="#eef1f4"/><rect x="0.300" y="2.500" width="1.700" height="17" fill="#8088d8"/><rect x="2" y="0.300" width="13.500" height="3" rx="1" fill="#c8aa50"/><path d="M4 0.300v3.500M6.600 0.300v3.500M9.200 0.300v3.500M11.800 0.300v3.500M14.200 0.300v3.500" stroke="#6a5a20" stroke-width=".9"/><path d="M5 7.500h6M5 10.500h8M5 13.500h8M5 16.500h3" stroke="#8c9aa8" stroke-width="1.400"/></svg>
<span class="t" style="left:102px;top:443.5px;font:16.5px/21px 'Liberation Sans',sans-serif;color:#000;">est_mos.prg</span>
<div style="left:56px;top:478px;width:17px;height:1px;background:repeating-linear-gradient(90deg,#fff 0 1px,#909090 1px 2px);"></div>
<svg class="a" style="left:74px;top:467px" width="18" height="22" viewBox="0 0 18 22" preserveAspectRatio="none"><rect x="2.500" y="2.500" width="15" height="19" rx="1.800" fill="#6a6a6a"/><rect x="1" y="1.500" width="14.800" height="18.800" rx="1.500" fill="#eef1f4"/><rect x="0.300" y="2.500" width="1.700" height="17" fill="#8088d8"/><rect x="2" y="0.300" width="13.500" height="3" rx="1" fill="#c8aa50"/><path d="M4 0.300v3.500M6.600 0.300v3.500M9.200 0.300v3.500M11.800 0.300v3.500M14.200 0.300v3.500" stroke="#6a5a20" stroke-width=".9"/><path d="M5 7.500h6M5 10.500h8M5 13.500h8M5 16.500h3" stroke="#8c9aa8" stroke-width="1.400"/></svg>
<span class="t" style="left:102px;top:467.5px;font:16.5px/21px 'Liberation Sans',sans-serif;color:#000;">etiq_pro.prg</span>
<div style="left:56px;top:502px;width:17px;height:1px;background:repeating-linear-gradient(90deg,#fff 0 1px,#909090 1px 2px);"></div>
<svg class="a" style="left:74px;top:491px" width="18" height="22" viewBox="0 0 18 22" preserveAspectRatio="none"><rect x="2.500" y="2.500" width="15" height="19" rx="1.800" fill="#6a6a6a"/><rect x="1" y="1.500" width="14.800" height="18.800" rx="1.500" fill="#eef1f4"/><rect x="0.300" y="2.500" width="1.700" height="17" fill="#8088d8"/><rect x="2" y="0.300" width="13.500" height="3" rx="1" fill="#c8aa50"/><path d="M4 0.300v3.500M6.600 0.300v3.500M9.200 0.300v3.500M11.800 0.300v3.500M14.200 0.300v3.500" stroke="#6a5a20" stroke-width=".9"/><path d="M5 7.500h6M5 10.500h8M5 13.500h8M5 16.500h3" stroke="#8c9aa8" stroke-width="1.400"/></svg>
<span class="t" style="left:102px;top:491.5px;font:16.5px/21px 'Liberation Sans',sans-serif;color:#000;">fin_bmv.prg</span>
<div style="left:56px;top:526px;width:17px;height:1px;background:repeating-linear-gradient(90deg,#fff 0 1px,#909090 1px 2px);"></div>
<svg class="a" style="left:74px;top:515px" width="18" height="22" viewBox="0 0 18 22" preserveAspectRatio="none"><rect x="2.500" y="2.500" width="15" height="19" rx="1.800" fill="#6a6a6a"/><rect x="1" y="1.500" width="14.800" height="18.800" rx="1.500" fill="#eef1f4"/><rect x="0.300" y="2.500" width="1.700" height="17" fill="#8088d8"/><rect x="2" y="0.300" width="13.500" height="3" rx="1" fill="#c8aa50"/><path d="M4 0.300v3.500M6.600 0.300v3.500M9.200 0.300v3.500M11.800 0.300v3.500M14.200 0.300v3.500" stroke="#6a5a20" stroke-width=".9"/><path d="M5 7.500h6M5 10.500h8M5 13.500h8M5 16.500h3" stroke="#8c9aa8" stroke-width="1.400"/></svg>
<span class="t" style="left:102px;top:515.5px;font:16.5px/21px 'Liberation Sans',sans-serif;color:#000;">fin_cai.prg</span>
<div style="left:56px;top:550px;width:17px;height:1px;background:repeating-linear-gradient(90deg,#fff 0 1px,#909090 1px 2px);"></div>
<svg class="a" style="left:74px;top:539px" width="18" height="22" viewBox="0 0 18 22" preserveAspectRatio="none"><rect x="2.500" y="2.500" width="15" height="19" rx="1.800" fill="#6a6a6a"/><rect x="1" y="1.500" width="14.800" height="18.800" rx="1.500" fill="#eef1f4"/><rect x="0.300" y="2.500" width="1.700" height="17" fill="#8088d8"/><rect x="2" y="0.300" width="13.500" height="3" rx="1" fill="#c8aa50"/><path d="M4 0.300v3.500M6.600 0.300v3.500M9.200 0.300v3.500M11.800 0.300v3.500M14.200 0.300v3.500" stroke="#6a5a20" stroke-width=".9"/><path d="M5 7.500h6M5 10.500h8M5 13.500h8M5 16.500h3" stroke="#8c9aa8" stroke-width="1.400"/></svg>
<span class="t" style="left:102px;top:539.5px;font:16.5px/21px 'Liberation Sans',sans-serif;color:#000;">fin_pag.prg</span>
<div style="left:56px;top:574px;width:17px;height:1px;background:repeating-linear-gradient(90deg,#fff 0 1px,#909090 1px 2px);"></div>
<svg class="a" style="left:74px;top:563px" width="18" height="22" viewBox="0 0 18 22" preserveAspectRatio="none"><rect x="2.500" y="2.500" width="15" height="19" rx="1.800" fill="#6a6a6a"/><rect x="1" y="1.500" width="14.800" height="18.800" rx="1.500" fill="#eef1f4"/><rect x="0.300" y="2.500" width="1.700" height="17" fill="#8088d8"/><rect x="2" y="0.300" width="13.500" height="3" rx="1" fill="#c8aa50"/><path d="M4 0.300v3.500M6.600 0.300v3.500M9.200 0.300v3.500M11.800 0.300v3.500M14.200 0.300v3.500" stroke="#6a5a20" stroke-width=".9"/><path d="M5 7.500h6M5 10.500h8M5 13.500h8M5 16.500h3" stroke="#8c9aa8" stroke-width="1.400"/></svg>
<span class="t" style="left:102px;top:563.5px;font:16.5px/21px 'Liberation Sans',sans-serif;color:#000;">fin_pagb.prg</span>
<div style="left:56px;top:598px;width:17px;height:1px;background:repeating-linear-gradient(90deg,#fff 0 1px,#909090 1px 2px);"></div>
<svg class="a" style="left:74px;top:587px" width="18" height="22" viewBox="0 0 18 22" preserveAspectRatio="none"><rect x="2.500" y="2.500" width="15" height="19" rx="1.800" fill="#6a6a6a"/><rect x="1" y="1.500" width="14.800" height="18.800" rx="1.500" fill="#eef1f4"/><rect x="0.300" y="2.500" width="1.700" height="17" fill="#8088d8"/><rect x="2" y="0.300" width="13.500" height="3" rx="1" fill="#c8aa50"/><path d="M4 0.300v3.500M6.600 0.300v3.500M9.200 0.300v3.500M11.800 0.300v3.500M14.200 0.300v3.500" stroke="#6a5a20" stroke-width=".9"/><path d="M5 7.500h6M5 10.500h8M5 13.500h8M5 16.500h3" stroke="#8c9aa8" stroke-width="1.400"/></svg>
<span class="t" style="left:102px;top:587.5px;font:16.5px/21px 'Liberation Sans',sans-serif;color:#000;">fin_rec.prg</span>
<div style="left:56px;top:622px;width:17px;height:1px;background:repeating-linear-gradient(90deg,#fff 0 1px,#909090 1px 2px);"></div>
<svg class="a" style="left:74px;top:611px" width="18" height="22" viewBox="0 0 18 22" preserveAspectRatio="none"><rect x="2.500" y="2.500" width="15" height="19" rx="1.800" fill="#6a6a6a"/><rect x="1" y="1.500" width="14.800" height="18.800" rx="1.500" fill="#eef1f4"/><rect x="0.300" y="2.500" width="1.700" height="17" fill="#8088d8"/><rect x="2" y="0.300" width="13.500" height="3" rx="1" fill="#c8aa50"/><path d="M4 0.300v3.500M6.600 0.300v3.500M9.200 0.300v3.500M11.800 0.300v3.500M14.200 0.300v3.500" stroke="#6a5a20" stroke-width=".9"/><path d="M5 7.500h6M5 10.500h8M5 13.500h8M5 16.500h3" stroke="#8c9aa8" stroke-width="1.400"/></svg>
<span class="t" style="left:102px;top:611.5px;font:16.5px/21px 'Liberation Sans',sans-serif;color:#000;">fin_recb.prg</span>
<div style="left:56px;top:646px;width:17px;height:1px;background:repeating-linear-gradient(90deg,#fff 0 1px,#909090 1px 2px);"></div>
<svg class="a" style="left:74px;top:635px" width="18" height="22" viewBox="0 0 18 22" preserveAspectRatio="none"><rect x="2.500" y="2.500" width="15" height="19" rx="1.800" fill="#6a6a6a"/><rect x="1" y="1.500" width="14.800" height="18.800" rx="1.500" fill="#eef1f4"/><rect x="0.300" y="2.500" width="1.700" height="17" fill="#8088d8"/><rect x="2" y="0.300" width="13.500" height="3" rx="1" fill="#c8aa50"/><path d="M4 0.300v3.500M6.600 0.300v3.500M9.200 0.300v3.500M11.800 0.300v3.500M14.200 0.300v3.500" stroke="#6a5a20" stroke-width=".9"/><path d="M5 7.500h6M5 10.500h8M5 13.500h8M5 16.500h3" stroke="#8c9aa8" stroke-width="1.400"/></svg>
<span class="t" style="left:102px;top:635.5px;font:16.5px/21px 'Liberation Sans',sans-serif;color:#000;">funcoes.prg</span>
<div style="left:56px;top:670px;width:17px;height:1px;background:repeating-linear-gradient(90deg,#fff 0 1px,#909090 1px 2px);"></div>
<svg class="a" style="left:74px;top:659px" width="18" height="22" viewBox="0 0 18 22" preserveAspectRatio="none"><rect x="2.500" y="2.500" width="15" height="19" rx="1.800" fill="#6a6a6a"/><rect x="1" y="1.500" width="14.800" height="18.800" rx="1.500" fill="#eef1f4"/><rect x="0.300" y="2.500" width="1.700" height="17" fill="#8088d8"/><rect x="2" y="0.300" width="13.500" height="3" rx="1" fill="#c8aa50"/><path d="M4 0.300v3.500M6.600 0.300v3.500M9.200 0.300v3.500M11.800 0.300v3.500M14.200 0.300v3.500" stroke="#6a5a20" stroke-width=".9"/><path d="M5 7.500h6M5 10.500h8M5 13.500h8M5 16.500h3" stroke="#8c9aa8" stroke-width="1.400"/></svg>
<span class="t" style="left:102px;top:659.5px;font:16.5px/21px 'Liberation Sans',sans-serif;color:#000;">getsys.prg</span>
<div style="left:56px;top:694px;width:17px;height:1px;background:repeating-linear-gradient(90deg,#fff 0 1px,#909090 1px 2px);"></div>
<svg class="a" style="left:74px;top:683px" width="18" height="22" viewBox="0 0 18 22" preserveAspectRatio="none"><rect x="2.500" y="2.500" width="15" height="19" rx="1.800" fill="#6a6a6a"/><rect x="1" y="1.500" width="14.800" height="18.800" rx="1.500" fill="#eef1f4"/><rect x="0.300" y="2.500" width="1.700" height="17" fill="#8088d8"/><rect x="2" y="0.300" width="13.500" height="3" rx="1" fill="#c8aa50"/><path d="M4 0.300v3.500M6.600 0.300v3.500M9.200 0.300v3.500M11.800 0.300v3.500M14.200 0.300v3.500" stroke="#6a5a20" stroke-width=".9"/><path d="M5 7.500h6M5 10.500h8M5 13.500h8M5 16.500h3" stroke="#8c9aa8" stroke-width="1.400"/></svg>
<span class="t" style="left:102px;top:683.5px;font:16.5px/21px 'Liberation Sans',sans-serif;color:#000;">grade_produtos.prg</span>
<div style="left:56px;top:718px;width:17px;height:1px;background:repeating-linear-gradient(90deg,#fff 0 1px,#909090 1px 2px);"></div>
<svg class="a" style="left:74px;top:707px" width="18" height="22" viewBox="0 0 18 22" preserveAspectRatio="none"><rect x="2.500" y="2.500" width="15" height="19" rx="1.800" fill="#6a6a6a"/><rect x="1" y="1.500" width="14.800" height="18.800" rx="1.500" fill="#eef1f4"/><rect x="0.300" y="2.500" width="1.700" height="17" fill="#8088d8"/><rect x="2" y="0.300" width="13.500" height="3" rx="1" fill="#c8aa50"/><path d="M4 0.300v3.500M6.600 0.300v3.500M9.200 0.300v3.500M11.800 0.300v3.500M14.200 0.300v3.500" stroke="#6a5a20" stroke-width=".9"/><path d="M5 7.500h6M5 10.500h8M5 13.500h8M5 16.500h3" stroke="#8c9aa8" stroke-width="1.400"/></svg>
<span class="t" style="left:102px;top:707.5px;font:16.5px/21px 'Liberation Sans',sans-serif;color:#000;">hist_cli.prg</span>
<div style="left:56px;top:742px;width:17px;height:1px;background:repeating-linear-gradient(90deg,#fff 0 1px,#909090 1px 2px);"></div>
<svg class="a" style="left:74px;top:731px" width="18" height="22" viewBox="0 0 18 22" preserveAspectRatio="none"><rect x="2.500" y="2.500" width="15" height="19" rx="1.800" fill="#6a6a6a"/><rect x="1" y="1.500" width="14.800" height="18.800" rx="1.500" fill="#eef1f4"/><rect x="0.300" y="2.500" width="1.700" height="17" fill="#8088d8"/><rect x="2" y="0.300" width="13.500" height="3" rx="1" fill="#c8aa50"/><path d="M4 0.300v3.500M6.600 0.300v3.500M9.200 0.300v3.500M11.800 0.300v3.500M14.200 0.300v3.500" stroke="#6a5a20" stroke-width=".9"/><path d="M5 7.500h6M5 10.500h8M5 13.500h8M5 16.500h3" stroke="#8c9aa8" stroke-width="1.400"/></svg>
<span class="t" style="left:102px;top:731.5px;font:16.5px/21px 'Liberation Sans',sans-serif;color:#000;">hist_for.prg</span>
<div style="left:56px;top:766px;width:17px;height:1px;background:repeating-linear-gradient(90deg,#fff 0 1px,#909090 1px 2px);"></div>
<svg class="a" style="left:74px;top:755px" width="18" height="22" viewBox="0 0 18 22" preserveAspectRatio="none"><rect x="2.500" y="2.500" width="15" height="19" rx="1.800" fill="#6a6a6a"/><rect x="1" y="1.500" width="14.800" height="18.800" rx="1.500" fill="#eef1f4"/><rect x="0.300" y="2.500" width="1.700" height="17" fill="#8088d8"/><rect x="2" y="0.300" width="13.500" height="3" rx="1" fill="#c8aa50"/><path d="M4 0.300v3.500M6.600 0.300v3.500M9.200 0.300v3.500M11.800 0.300v3.500M14.200 0.300v3.500" stroke="#6a5a20" stroke-width=".9"/><path d="M5 7.500h6M5 10.500h8M5 13.500h8M5 16.500h3" stroke="#8c9aa8" stroke-width="1.400"/></svg>
<span class="t" style="left:102px;top:755.5px;font:16.5px/21px 'Liberation Sans',sans-serif;color:#000;">icones.rc</span>
<div style="left:56px;top:790px;width:17px;height:1px;background:repeating-linear-gradient(90deg,#fff 0 1px,#909090 1px 2px);"></div>
<svg class="a" style="left:74px;top:779px" width="18" height="22" viewBox="0 0 18 22" preserveAspectRatio="none"><rect x="2.500" y="2.500" width="15" height="19" rx="1.800" fill="#6a6a6a"/><rect x="1" y="1.500" width="14.800" height="18.800" rx="1.500" fill="#eef1f4"/><rect x="0.300" y="2.500" width="1.700" height="17" fill="#8088d8"/><rect x="2" y="0.300" width="13.500" height="3" rx="1" fill="#c8aa50"/><path d="M4 0.300v3.500M6.600 0.300v3.500M9.200 0.300v3.500M11.800 0.300v3.500M14.200 0.300v3.500" stroke="#6a5a20" stroke-width=".9"/><path d="M5 7.500h6M5 10.500h8M5 13.500h8M5 16.500h3" stroke="#8c9aa8" stroke-width="1.400"/></svg>
<span class="t" style="left:102px;top:779.5px;font:16.5px/21px 'Liberation Sans',sans-serif;color:#000;">imp_factura.prg</span>
<div style="left:56px;top:814px;width:17px;height:1px;background:repeating-linear-gradient(90deg,#fff 0 1px,#909090 1px 2px);"></div>
<svg class="a" style="left:74px;top:803px" width="18" height="22" viewBox="0 0 18 22" preserveAspectRatio="none"><rect x="2.500" y="2.500" width="15" height="19" rx="1.800" fill="#6a6a6a"/><rect x="1" y="1.500" width="14.800" height="18.800" rx="1.500" fill="#eef1f4"/><rect x="0.300" y="2.500" width="1.700" height="17" fill="#8088d8"/><rect x="2" y="0.300" width="13.500" height="3" rx="1" fill="#c8aa50"/><path d="M4 0.300v3.500M6.600 0.300v3.500M9.200 0.300v3.500M11.800 0.300v3.500M14.200 0.300v3.500" stroke="#6a5a20" stroke-width=".9"/><path d="M5 7.500h6M5 10.500h8M5 13.500h8M5 16.500h3" stroke="#8c9aa8" stroke-width="1.400"/></svg>
<span class="t" style="left:102px;top:803.5px;font:16.5px/21px 'Liberation Sans',sans-serif;color:#000;">imp_pcmp.prg</span>
<div style="left:56px;top:838px;width:17px;height:1px;background:repeating-linear-gradient(90deg,#fff 0 1px,#909090 1px 2px);"></div>
<svg class="a" style="left:74px;top:827px" width="18" height="22" viewBox="0 0 18 22" preserveAspectRatio="none"><rect x="2.500" y="2.500" width="15" height="19" rx="1.800" fill="#6a6a6a"/><rect x="1" y="1.500" width="14.800" height="18.800" rx="1.500" fill="#eef1f4"/><rect x="0.300" y="2.500" width="1.700" height="17" fill="#8088d8"/><rect x="2" y="0.300" width="13.500" height="3" rx="1" fill="#c8aa50"/><path d="M4 0.300v3.500M6.600 0.300v3.500M9.200 0.300v3.500M11.800 0.300v3.500M14.200 0.300v3.500" stroke="#6a5a20" stroke-width=".9"/><path d="M5 7.500h6M5 10.500h8M5 13.500h8M5 16.500h3" stroke="#8c9aa8" stroke-width="1.400"/></svg>
<span class="t" style="left:102px;top:827.5px;font:16.5px/21px 'Liberation Sans',sans-serif;color:#000;">imp_pven.prg</span>
<div style="left:56px;top:862px;width:17px;height:1px;background:repeating-linear-gradient(90deg,#fff 0 1px,#909090 1px 2px);"></div>
<svg class="a" style="left:74px;top:851px" width="18" height="22" viewBox="0 0 18 22" preserveAspectRatio="none"><rect x="2.500" y="2.500" width="15" height="19" rx="1.800" fill="#6a6a6a"/><rect x="1" y="1.500" width="14.800" height="18.800" rx="1.500" fill="#eef1f4"/><rect x="0.300" y="2.500" width="1.700" height="17" fill="#8088d8"/><rect x="2" y="0.300" width="13.500" height="3" rx="1" fill="#c8aa50"/><path d="M4 0.300v3.500M6.600 0.300v3.500M9.200 0.300v3.500M11.800 0.300v3.500M14.200 0.300v3.500" stroke="#6a5a20" stroke-width=".9"/><path d="M5 7.500h6M5 10.500h8M5 13.500h8M5 16.500h3" stroke="#8c9aa8" stroke-width="1.400"/></svg>
<span class="t" style="left:102px;top:851.5px;font:16.5px/21px 'Liberation Sans',sans-serif;color:#000;">import_xml.prg</span>
<div style="left:56px;top:886px;width:17px;height:1px;background:repeating-linear-gradient(90deg,#fff 0 1px,#909090 1px 2px);"></div>
<svg class="a" style="left:74px;top:875px" width="18" height="22" viewBox="0 0 18 22" preserveAspectRatio="none"><rect x="2.500" y="2.500" width="15" height="19" rx="1.800" fill="#6a6a6a"/><rect x="1" y="1.500" width="14.800" height="18.800" rx="1.500" fill="#eef1f4"/><rect x="0.300" y="2.500" width="1.700" height="17" fill="#8088d8"/><rect x="2" y="0.300" width="13.500" height="3" rx="1" fill="#c8aa50"/><path d="M4 0.300v3.500M6.600 0.300v3.500M9.200 0.300v3.500M11.800 0.300v3.500M14.200 0.300v3.500" stroke="#6a5a20" stroke-width=".9"/><path d="M5 7.500h6M5 10.500h8M5 13.500h8M5 16.500h3" stroke="#8c9aa8" stroke-width="1.400"/></svg>
<span class="t" style="left:102px;top:875.5px;font:16.5px/21px 'Liberation Sans',sans-serif;color:#000;">kit_pro.prg</span>
<div style="left:56px;top:910px;width:17px;height:1px;background:repeating-linear-gradient(90deg,#fff 0 1px,#909090 1px 2px);"></div>
<svg class="a" style="left:74px;top:899px" width="18" height="22" viewBox="0 0 18 22" preserveAspectRatio="none"><rect x="2.500" y="2.500" width="15" height="19" rx="1.800" fill="#6a6a6a"/><rect x="1" y="1.500" width="14.800" height="18.800" rx="1.500" fill="#eef1f4"/><rect x="0.300" y="2.500" width="1.700" height="17" fill="#8088d8"/><rect x="2" y="0.300" width="13.500" height="3" rx="1" fill="#c8aa50"/><path d="M4 0.300v3.500M6.600 0.300v3.500M9.200 0.300v3.500M11.800 0.300v3.500M14.200 0.300v3.500" stroke="#6a5a20" stroke-width=".9"/><path d="M5 7.500h6M5 10.500h8M5 13.500h8M5 16.500h3" stroke="#8c9aa8" stroke-width="1.400"/></svg>
<span class="t" style="left:102px;top:899.5px;font:16.5px/21px 'Liberation Sans',sans-serif;color:#000;">mod_comp.prg</span>
<div style="left:56px;top:934px;width:17px;height:1px;background:repeating-linear-gradient(90deg,#fff 0 1px,#909090 1px 2px);"></div>
<svg class="a" style="left:74px;top:923px" width="18" height="22" viewBox="0 0 18 22" preserveAspectRatio="none"><rect x="2.500" y="2.500" width="15" height="19" rx="1.800" fill="#6a6a6a"/><rect x="1" y="1.500" width="14.800" height="18.800" rx="1.500" fill="#eef1f4"/><rect x="0.300" y="2.500" width="1.700" height="17" fill="#8088d8"/><rect x="2" y="0.300" width="13.500" height="3" rx="1" fill="#c8aa50"/><path d="M4 0.300v3.500M6.600 0.300v3.500M9.200 0.300v3.500M11.800 0.300v3.500M14.200 0.300v3.500" stroke="#6a5a20" stroke-width=".9"/><path d="M5 7.500h6M5 10.500h8M5 13.500h8M5 16.500h3" stroke="#8c9aa8" stroke-width="1.400"/></svg>
<span class="t" style="left:102px;top:923.5px;font:16.5px/21px 'Liberation Sans',sans-serif;color:#000;">mod_vend.prg</span>
<div style="left:56px;top:958px;width:17px;height:1px;background:repeating-linear-gradient(90deg,#fff 0 1px,#909090 1px 2px);"></div>
<svg class="a" style="left:74px;top:947px" width="18" height="22" viewBox="0 0 18 22" preserveAspectRatio="none"><rect x="2.500" y="2.500" width="15" height="19" rx="1.800" fill="#6a6a6a"/><rect x="1" y="1.500" width="14.800" height="18.800" rx="1.500" fill="#eef1f4"/><rect x="0.300" y="2.500" width="1.700" height="17" fill="#8088d8"/><rect x="2" y="0.300" width="13.500" height="3" rx="1" fill="#c8aa50"/><path d="M4 0.300v3.500M6.600 0.300v3.500M9.200 0.300v3.500M11.800 0.300v3.500M14.200 0.300v3.500" stroke="#6a5a20" stroke-width=".9"/><path d="M5 7.500h6M5 10.500h8M5 13.500h8M5 16.500h3" stroke="#8c9aa8" stroke-width="1.400"/></svg>
<span class="t" style="left:102px;top:947.5px;font:16.5px/21px 'Liberation Sans',sans-serif;color:#000;">notas.prg</span>
<div style="left:56px;top:982px;width:17px;height:1px;background:repeating-linear-gradient(90deg,#fff 0 1px,#909090 1px 2px);"></div>
<svg class="a" style="left:74px;top:971px" width="18" height="22" viewBox="0 0 18 22" preserveAspectRatio="none"><rect x="2.500" y="2.500" width="15" height="19" rx="1.800" fill="#6a6a6a"/><rect x="1" y="1.500" width="14.800" height="18.800" rx="1.500" fill="#eef1f4"/><rect x="0.300" y="2.500" width="1.700" height="17" fill="#8088d8"/><rect x="2" y="0.300" width="13.500" height="3" rx="1" fill="#c8aa50"/><path d="M4 0.300v3.500M6.600 0.300v3.500M9.200 0.300v3.500M11.800 0.300v3.500M14.200 0.300v3.500" stroke="#6a5a20" stroke-width=".9"/><path d="M5 7.500h6M5 10.500h8M5 13.500h8M5 16.500h3" stroke="#8c9aa8" stroke-width="1.400"/></svg>
<span class="t" style="left:102px;top:971.5px;font:16.5px/21px 'Liberation Sans',sans-serif;color:#000;">rel_clientes.prg</span>
<div style="left:56px;top:1006px;width:17px;height:1px;background:repeating-linear-gradient(90deg,#fff 0 1px,#909090 1px 2px);"></div>
<svg class="a" style="left:74px;top:995px" width="18" height="22" viewBox="0 0 18 22" preserveAspectRatio="none"><rect x="2.500" y="2.500" width="15" height="19" rx="1.800" fill="#6a6a6a"/><rect x="1" y="1.500" width="14.800" height="18.800" rx="1.500" fill="#eef1f4"/><rect x="0.300" y="2.500" width="1.700" height="17" fill="#8088d8"/><rect x="2" y="0.300" width="13.500" height="3" rx="1" fill="#c8aa50"/><path d="M4 0.300v3.500M6.600 0.300v3.500M9.200 0.300v3.500M11.800 0.300v3.500M14.200 0.300v3.500" stroke="#6a5a20" stroke-width=".9"/><path d="M5 7.500h6M5 10.500h8M5 13.500h8M5 16.500h3" stroke="#8c9aa8" stroke-width="1.400"/></svg>
<span class="t" style="left:102px;top:995.5px;font:16.5px/21px 'Liberation Sans',sans-serif;color:#000;">rel_comp.prg</span>
<div style="left:56px;top:1030px;width:17px;height:1px;background:repeating-linear-gradient(90deg,#fff 0 1px,#909090 1px 2px);"></div>
<svg class="a" style="left:74px;top:1019px" width="18" height="22" viewBox="0 0 18 22" preserveAspectRatio="none"><rect x="2.500" y="2.500" width="15" height="19" rx="1.800" fill="#6a6a6a"/><rect x="1" y="1.500" width="14.800" height="18.800" rx="1.500" fill="#eef1f4"/><rect x="0.300" y="2.500" width="1.700" height="17" fill="#8088d8"/><rect x="2" y="0.300" width="13.500" height="3" rx="1" fill="#c8aa50"/><path d="M4 0.300v3.500M6.600 0.300v3.500M9.200 0.300v3.500M11.800 0.300v3.500M14.200 0.300v3.500" stroke="#6a5a20" stroke-width=".9"/><path d="M5 7.500h6M5 10.500h8M5 13.500h8M5 16.500h3" stroke="#8c9aa8" stroke-width="1.400"/></svg>
<span class="t" style="left:102px;top:1019.5px;font:16.5px/21px 'Liberation Sans',sans-serif;color:#000;">rel_inventario.prg</span>
<div style="left:56px;top:1054px;width:17px;height:1px;background:repeating-linear-gradient(90deg,#fff 0 1px,#909090 1px 2px);"></div>
<svg class="a" style="left:74px;top:1043px" width="18" height="22" viewBox="0 0 18 22" preserveAspectRatio="none"><rect x="2.500" y="2.500" width="15" height="19" rx="1.800" fill="#6a6a6a"/><rect x="1" y="1.500" width="14.800" height="18.800" rx="1.500" fill="#eef1f4"/><rect x="0.300" y="2.500" width="1.700" height="17" fill="#8088d8"/><rect x="2" y="0.300" width="13.500" height="3" rx="1" fill="#c8aa50"/><path d="M4 0.300v3.500M6.600 0.300v3.500M9.200 0.300v3.500M11.800 0.300v3.500M14.200 0.300v3.500" stroke="#6a5a20" stroke-width=".9"/><path d="M5 7.500h6M5 10.500h8M5 13.500h8M5 16.500h3" stroke="#8c9aa8" stroke-width="1.400"/></svg>
<span class="t" style="left:102px;top:1043.5px;font:16.5px/21px 'Liberation Sans',sans-serif;color:#000;">rel_pag.prg</span>
<div style="left:56px;top:1078px;width:17px;height:1px;background:repeating-linear-gradient(90deg,#fff 0 1px,#909090 1px 2px);"></div>
<svg class="a" style="left:74px;top:1067px" width="18" height="22" viewBox="0 0 18 22" preserveAspectRatio="none"><rect x="2.500" y="2.500" width="15" height="19" rx="1.800" fill="#6a6a6a"/><rect x="1" y="1.500" width="14.800" height="18.800" rx="1.500" fill="#eef1f4"/><rect x="0.300" y="2.500" width="1.700" height="17" fill="#8088d8"/><rect x="2" y="0.300" width="13.500" height="3" rx="1" fill="#c8aa50"/><path d="M4 0.300v3.500M6.600 0.300v3.500M9.200 0.300v3.500M11.800 0.300v3.500M14.200 0.300v3.500" stroke="#6a5a20" stroke-width=".9"/><path d="M5 7.500h6M5 10.500h8M5 13.500h8M5 16.500h3" stroke="#8c9aa8" stroke-width="1.400"/></svg>
<span class="t" style="left:102px;top:1067.5px;font:16.5px/21px 'Liberation Sans',sans-serif;color:#000;">rel_prod.prg</span>
<div style="left:56px;top:1102px;width:17px;height:1px;background:repeating-linear-gradient(90deg,#fff 0 1px,#909090 1px 2px);"></div>
<svg class="a" style="left:74px;top:1091px" width="18" height="22" viewBox="0 0 18 22" preserveAspectRatio="none"><rect x="2.500" y="2.500" width="15" height="19" rx="1.800" fill="#6a6a6a"/><rect x="1" y="1.500" width="14.800" height="18.800" rx="1.500" fill="#eef1f4"/><rect x="0.300" y="2.500" width="1.700" height="17" fill="#8088d8"/><rect x="2" y="0.300" width="13.500" height="3" rx="1" fill="#c8aa50"/><path d="M4 0.300v3.500M6.600 0.300v3.500M9.200 0.300v3.500M11.800 0.300v3.500M14.200 0.300v3.500" stroke="#6a5a20" stroke-width=".9"/><path d="M5 7.500h6M5 10.500h8M5 13.500h8M5 16.500h3" stroke="#8c9aa8" stroke-width="1.400"/></svg>
<span class="t" style="left:102px;top:1091.5px;font:16.5px/21px 'Liberation Sans',sans-serif;color:#000;">rel_rec.prg</span>
<div style="left:56px;top:1126px;width:17px;height:1px;background:repeating-linear-gradient(90deg,#fff 0 1px,#909090 1px 2px);"></div>
<svg class="a" style="left:74px;top:1115px" width="18" height="22" viewBox="0 0 18 22" preserveAspectRatio="none"><rect x="2.500" y="2.500" width="15" height="19" rx="1.800" fill="#6a6a6a"/><rect x="1" y="1.500" width="14.800" height="18.800" rx="1.500" fill="#eef1f4"/><rect x="0.300" y="2.500" width="1.700" height="17" fill="#8088d8"/><rect x="2" y="0.300" width="13.500" height="3" rx="1" fill="#c8aa50"/><path d="M4 0.300v3.500M6.600 0.300v3.500M9.200 0.300v3.500M11.800 0.300v3.500M14.200 0.300v3.500" stroke="#6a5a20" stroke-width=".9"/><path d="M5 7.500h6M5 10.500h8M5 13.500h8M5 16.500h3" stroke="#8c9aa8" stroke-width="1.400"/></svg>
<span class="t" style="left:102px;top:1115.5px;font:16.5px/21px 'Liberation Sans',sans-serif;color:#000;">rel_vend.prg</span>
<div style="left:56px;top:1150px;width:17px;height:1px;background:repeating-linear-gradient(90deg,#fff 0 1px,#909090 1px 2px);"></div>
<svg class="a" style="left:74px;top:1139px" width="18" height="22" viewBox="0 0 18 22" preserveAspectRatio="none"><rect x="2.500" y="2.500" width="15" height="19" rx="1.800" fill="#6a6a6a"/><rect x="1" y="1.500" width="14.800" height="18.800" rx="1.500" fill="#eef1f4"/><rect x="0.300" y="2.500" width="1.700" height="17" fill="#8088d8"/><rect x="2" y="0.300" width="13.500" height="3" rx="1" fill="#c8aa50"/><path d="M4 0.300v3.500M6.600 0.300v3.500M9.200 0.300v3.500M11.800 0.300v3.500M14.200 0.300v3.500" stroke="#6a5a20" stroke-width=".9"/><path d="M5 7.500h6M5 10.500h8M5 13.500h8M5 16.500h3" stroke="#8c9aa8" stroke-width="1.400"/></svg>
<span class="t" style="left:102px;top:1139.5px;font:16.5px/21px 'Liberation Sans',sans-serif;color:#000;">transf_est.prg</span>
<div style="left:56px;top:1174px;width:17px;height:1px;background:repeating-linear-gradient(90deg,#fff 0 1px,#909090 1px 2px);"></div>
<svg class="a" style="left:74px;top:1163px" width="18" height="22" viewBox="0 0 18 22" preserveAspectRatio="none"><rect x="2.500" y="2.500" width="15" height="19" rx="1.800" fill="#6a6a6a"/><rect x="1" y="1.500" width="14.800" height="18.800" rx="1.500" fill="#eef1f4"/><rect x="0.300" y="2.500" width="1.700" height="17" fill="#8088d8"/><rect x="2" y="0.300" width="13.500" height="3" rx="1" fill="#c8aa50"/><path d="M4 0.300v3.500M6.600 0.300v3.500M9.200 0.300v3.500M11.800 0.300v3.500M14.200 0.300v3.500" stroke="#6a5a20" stroke-width=".9"/><path d="M5 7.500h6M5 10.500h8M5 13.500h8M5 16.500h3" stroke="#8c9aa8" stroke-width="1.400"/></svg>
<span class="t" style="left:102px;top:1163.5px;font:16.5px/21px 'Liberation Sans',sans-serif;color:#000;transform:scaleX(0.9384);">VISUALLIB.prg</span>
<div style="left:56px;top:1198px;width:17px;height:1px;background:repeating-linear-gradient(90deg,#fff 0 1px,#909090 1px 2px);"></div>
<svg class="a" style="left:74px;top:1187px" width="18" height="22" viewBox="0 0 18 22" preserveAspectRatio="none"><rect x="2.500" y="2.500" width="15" height="19" rx="1.800" fill="#6a6a6a"/><rect x="1" y="1.500" width="14.800" height="18.800" rx="1.500" fill="#eef1f4"/><rect x="0.300" y="2.500" width="1.700" height="17" fill="#8088d8"/><rect x="2" y="0.300" width="13.500" height="3" rx="1" fill="#c8aa50"/><path d="M4 0.300v3.500M6.600 0.300v3.500M9.200 0.300v3.500M11.800 0.300v3.500M14.200 0.300v3.500" stroke="#6a5a20" stroke-width=".9"/><path d="M5 7.500h6M5 10.500h8M5 13.500h8M5 16.500h3" stroke="#8c9aa8" stroke-width="1.400"/></svg>
<span class="t" style="left:102px;top:1187.5px;font:16.5px/21px 'Liberation Sans',sans-serif;color:#000;">win32prn.prg</span>
<div style="left:56px;top:1222px;width:17px;height:1px;background:repeating-linear-gradient(90deg,#fff 0 1px,#909090 1px 2px);"></div>
<svg class="a" style="left:74px;top:1211px" width="18" height="22" viewBox="0 0 18 22" preserveAspectRatio="none"><rect x="2.500" y="2.500" width="15" height="19" rx="1.800" fill="#6a6a6a"/><rect x="1" y="1.500" width="14.800" height="18.800" rx="1.500" fill="#eef1f4"/><rect x="0.300" y="2.500" width="1.700" height="17" fill="#8088d8"/><rect x="2" y="0.300" width="13.500" height="3" rx="1" fill="#c8aa50"/><path d="M4 0.300v3.500M6.600 0.300v3.500M9.200 0.300v3.500M11.800 0.300v3.500M14.200 0.300v3.500" stroke="#6a5a20" stroke-width=".9"/><path d="M5 7.500h6M5 10.500h8M5 13.500h8M5 16.500h3" stroke="#8c9aa8" stroke-width="1.400"/></svg>
<span class="t" style="left:102px;top:1211.5px;font:16.5px/21px 'Liberation Sans',sans-serif;color:#000;">xhberr.prg</span>
<span class="t" style="left:8px;top:1249.5px;font:16.5px/21px 'Liberation Sans',sans-serif;font-weight:bold;color:#000;transform:scaleX(1.0291);">Módulo:</span>
<span class="t" style="left:78px;top:1249.5px;font:16.5px/21px 'Liberation Sans',sans-serif;color:#000;transform:scaleX(0.9899);">import_xml.prg</span>
<span class="t" style="left:8px;top:1268.5px;font:16.5px/21px 'Liberation Sans',sans-serif;font-weight:bold;color:#000;transform:scaleX(1.0425);">Path:</span>
<span class="t" style="left:55px;top:1268.5px;font:16.5px/21px 'Liberation Sans',sans-serif;color:#000;transform:scaleX(0.9409);">D:\CONTROLE_\PRG\</span>
<span class="t" style="left:8px;top:1288.5px;font:16.5px/21px 'Liberation Sans',sans-serif;font-weight:bold;color:#000;transform:scaleX(1.1150);">Data:</span>
<span class="t" style="left:58px;top:1288.5px;font:16.5px/21px 'Liberation Sans',sans-serif;color:#000;transform:scaleX(1.0256);">11/10/2023 16:59:14</span>
<div style="left:6px;top:1313px;width:309px;height:1px;background:#e8e8e2;"></div>
<div style="left:2px;top:1328px;width:2207px;height:2px;background:#fafafa;"></div>
<div style="left:5px;top:1335px;width:78px;height:24px;background:#f7f7f7;"></div>
<div style="left:85px;top:1335px;width:104px;height:24px;background:#f7f7f7;"></div>
<span class="t" style="left:12px;top:1337.5px;font:16.5px/21px 'Liberation Sans',sans-serif;color:#000;transform:scaleX(0.9241);">Compiler</span>
<span class="t" style="left:92px;top:1337.5px;font:16.5px/21px 'Liberation Sans',sans-serif;color:#000;transform:scaleX(0.9274);">Compiler Log</span>
<div style="left:333.5px;top:119px;width:144px;height:32px;background:#f4f4f4;box-sizing:border-box;border:1.5px solid #8a8a8a;border-bottom:none;border-top-color:#aaa;"></div>
<svg class="a" style="left:340px;top:123px" width="20" height="22" viewBox="0 0 24 24" preserveAspectRatio="none"><path d="M3 3h11v18H3z" fill="#fff" stroke="#777" stroke-width="1.200"/><path d="M8 14l9-12 3 2-9 12-4 2z" fill="#f0b830" stroke="#a07010" stroke-width="1"/></svg>
<span class="t" style="left:361px;top:123.5px;font:16.5px/21px 'Liberation Sans',sans-serif;color:#000;transform:scaleX(0.9899);">import_xml.prg</span>
<div style="left:329px;top:147px;width:1564px;height:1171px;box-sizing:border-box;border:2px solid #909090;border-top-color:#8a8a8a;border-radius:0 0 10px 10px;background:#f0f0f0;"></div>
<div style="left:335px;top:148px;width:141px;height:4px;background:#f3f3f3;"></div>
<div style="left:338px;top:158px;width:1519px;height:1089px;background:#fff;"></div>
<div style="left:338px;top:158px;width:83px;height:1089px;background:linear-gradient(90deg,#f5f5f5,#e4e4e4);"></div>
<div style="left:1857px;top:158px;width:28px;height:1089px;background:#f6f6f6;"></div>
<div style="left:1267px;top:158px;width:1px;height:1089px;background:#b8b8b8;"></div>
<div style="left:1867px;top:1200px;width:3px;height:20px;background:#777;"></div>
<span class="t" style="left:386.5px;top:160.5px;font:17.4px/24px 'Liberation Mono',monospace;white-space:pre;color:#3a3a3a">899</span>
<span class="t" style="left:428px;top:160.5px;font:17.4px/24px 'Liberation Mono',monospace;white-space:pre;"><span style="color:#222">   char         cExt[ </span><span style="color:#e01010">4</span><span style="color:#222"> ];</span></span>
<span class="t" style="left:386.5px;top:184.5px;font:17.4px/24px 'Liberation Mono',monospace;white-space:pre;color:#3a3a3a">900</span>
<span class="t" style="left:428px;top:184.5px;font:17.4px/24px 'Liberation Mono',monospace;white-space:pre;"><span style="color:#222">   </span><span style="color:#808000">int</span><span style="color:#222">          iFilterIndex = </span><span style="color:#e01010">1</span><span style="color:#222">;</span></span>
<span class="t" style="left:386.5px;top:208.5px;font:17.4px/24px 'Liberation Mono',monospace;white-space:pre;color:#3a3a3a">901</span>
<span class="t" style="left:428px;top:208.5px;font:17.4px/24px 'Liberation Mono',monospace;white-space:pre;"><span style="color:#222">   DWORD        flags = OFN_FILEMUSTEXIST | OFN_EXPLORER;</span></span>
<span class="t" style="left:386.5px;top:232.5px;font:17.4px/24px 'Liberation Mono',monospace;white-space:pre;color:#3a3a3a">902</span>
<span class="t" style="left:386.5px;top:256.5px;font:17.4px/24px 'Liberation Mono',monospace;white-space:pre;color:#3a3a3a">903</span>
<span class="t" style="left:428px;top:256.5px;font:17.4px/24px 'Liberation Mono',monospace;white-space:pre;"><span style="color:#222">   </span><span style="color:#a02020">if</span><span style="color:#222">( </span><span style="color:#808000">hb_parl</span><span style="color:#222">( </span><span style="color:#e01010">4</span><span style="color:#222"> ) )</span></span>
<span class="t" style="left:386.5px;top:1072.5px;font:17.4px/24px 'Liberation Mono',monospace;white-space:pre;color:#3a3a3a">937</span>
<span class="t" style="left:428px;top:1072.5px;font:17.4px/24px 'Liberation Mono',monospace;white-space:pre;"><span style="color:#222">      </span><span style="color:#808000">hb_retc</span><span style="color:#222">( ofn.lpstrFile );</span></span>
<span class="t" style="left:386.5px;top:1096.5px;font:17.4px/24px 'Liberation Mono',monospace;white-space:pre;color:#3a3a3a">938</span>
<span class="t" style="left:428px;top:1096.5px;font:17.4px/24px 'Liberation Mono',monospace;white-space:pre;"><span style="color:#222">   }</span></span>
<span class="t" style="left:386.5px;top:1120.5px;font:17.4px/24px 'Liberation Mono',monospace;white-space:pre;color:#3a3a3a">939</span>
<span class="t" style="left:428px;top:1120.5px;font:17.4px/24px 'Liberation Mono',monospace;white-space:pre;"><span style="color:#222">   </span><span style="color:#a02020">else</span></span>
<span class="t" style="left:386.5px;top:1144.5px;font:17.4px/24px 'Liberation Mono',monospace;white-space:pre;color:#3a3a3a">940</span>
<span class="t" style="left:428px;top:1144.5px;font:17.4px/24px 'Liberation Mono',monospace;white-space:pre;"><span style="color:#222">      </span><span style="color:#808000">hb_retc</span><span style="color:#222">( </span><span style="color:#000080">""</span><span style="color:#222"> );</span></span>
<span class="t" style="left:386.5px;top:1168.5px;font:17.4px/24px 'Liberation Mono',monospace;white-space:pre;color:#3a3a3a">941</span>
<span class="t" style="left:428px;top:1168.5px;font:17.4px/24px 'Liberation Mono',monospace;white-space:pre;"><span style="color:#222">}</span></span>
<span class="t" style="left:386.5px;top:1192.5px;font:17.4px/24px 'Liberation Mono',monospace;white-space:pre;color:#3a3a3a">942</span>
<span class="t" style="left:428px;top:1192.5px;font:17.4px/24px 'Liberation Mono',monospace;white-space:pre;"><span style="color:#a010a0">#pragma</span><span style="color:#222"> ENDDUMP</span></span>
<span class="t" style="left:386.5px;top:1216.5px;font:17.4px/24px 'Liberation Mono',monospace;white-space:pre;color:#3a3a3a">943</span>
<div style="left:367px;top:1258px;width:193px;height:3px;background:#7c7c7c;border-radius:2px;"></div>
<div style="left:337px;top:1279px;width:208px;height:33px;background:linear-gradient(#f4f3ef,#e9e7e1);box-sizing:border-box;border:1.5px solid #a6a6a6;border-radius:2px;box-shadow:inset 0 0 0 1px rgba(255,255,255,.85),0 1px 0 #fff;"></div>
<span class="t" style="left:385.0px;top:1285.5px;font:16.5px/21px 'Liberation Sans',sans-serif;color:#000;transform:scaleX(0.9846);">Lin: 943 de 943</span>
<div style="left:549px;top:1279px;width:135px;height:33px;background:linear-gradient(#f4f3ef,#e9e7e1);box-sizing:border-box;border:1.5px solid #a6a6a6;border-radius:2px;box-shadow:inset 0 0 0 1px rgba(255,255,255,.85),0 1px 0 #fff;"></div>
<span class="t" style="left:595.0px;top:1285.5px;font:16.5px/21px 'Liberation Sans',sans-serif;color:#000;">Col: 1</span>
<div style="left:688px;top:1279px;width:128px;height:33px;background:linear-gradient(#f4f3ef,#e9e7e1);box-sizing:border-box;border:1.5px solid #a6a6a6;border-radius:2px;box-shadow:inset 0 0 0 1px rgba(255,255,255,.85),0 1px 0 #fff;"></div>
<span class="t" style="left:728.5px;top:1285.5px;font:16.5px/21px 'Liberation Sans',sans-serif;color:#000;transform:scaleX(1.0250);">Insere</span>
<div style="left:820px;top:1279px;width:104px;height:33px;background:linear-gradient(#f4f3ef,#e9e7e1);box-sizing:border-box;border:1.5px solid #a6a6a6;border-radius:2px;box-shadow:inset 0 0 0 1px rgba(255,255,255,.85),0 1px 0 #fff;"></div>
<span class="t" style="left:841.0px;top:1285.5px;font:16.5px/21px 'Liberation Sans',sans-serif;color:#000;transform:scaleX(1.0089);">Alterado</span>
<div style="left:929px;top:1279px;width:956px;height:32px;background:linear-gradient(#fff,#f4f4f4);"></div>
<div style="left:929px;top:1279px;width:956px;height:1px;background:#9a9a9a;"></div>
<div style="left:941px;top:1276px;width:104px;height:35px;background:#fff;box-sizing:border-box;border:1.5px solid #8a8a8a;border-top:none;"></div>
<span class="t" style="left:945px;top:1280.5px;font:16.5px/21px 'Liberation Sans',sans-serif;color:#000;transform:scaleX(0.9490);">Código Fonte</span>
<div style="left:1046px;top:1281px;width:72px;height:27px;background:#f0f0f0;"></div>
<span class="t" style="left:1050px;top:1280.5px;font:16.5px/21px 'Liberation Sans',sans-serif;color:#8c8c8c;transform:scaleX(0.9541);">Designer</span>
<div style="left:1118px;top:1283px;width:1px;height:24px;background:#bbb;"></div>
<span class="t" style="left:1123px;top:1280.5px;font:16.5px/21px 'Liberation Sans',sans-serif;color:#8c8c8c;transform:scaleX(0.9661);">Histórico</span>
<div style="left:1190px;top:1283px;width:1px;height:24px;background:#bbb;"></div>
<span class="t" style="left:1867px;top:1283.0px;font:14px/18px 'DejaVu Sans',sans-serif;color:#8a8a8a;">※</span>
<div style="left:1900px;top:120px;width:315px;height:31px;background:#fff;"></div>
<div style="left:1900px;top:151px;width:315px;height:2px;background:#a0a0a0;"></div>
<div style="left:1912px;top:120px;width:76px;height:33px;background:#fff;box-sizing:border-box;border:1.5px solid #8a8a8a;border-top-color:#b0b0b0;border-bottom:none;"></div>
<div style="left:1914px;top:150px;width:73px;height:3px;background:#fff;"></div>
<span class="t" style="left:1916px;top:123.5px;font:16.5px/21px 'Liberation Sans',sans-serif;color:#000;transform:scaleX(0.9561);">Estrutura</span>
<span class="t" style="left:2195px;top:125.0px;font:14px/18px 'DejaVu Sans',sans-serif;color:#8a8a8a;">※</span>
<div style="left:1906px;top:163px;width:303px;height:35px;background:linear-gradient(#f5f4f0,#e9e7e0);box-sizing:border-box;border:1.5px solid #a6a6a6;border-radius:2px;box-shadow:inset 0 0 0 1px rgba(255,255,255,.85),0 1px 0 #fff;"></div>
<span class="t" style="left:1918px;top:169.5px;font:16.5px/21px 'Liberation Sans',sans-serif;color:#000;transform:scaleX(0.9881);">Estrutura do documento</span>
<div style="left:1906px;top:203px;width:303px;height:32px;background:linear-gradient(#f9f9f9,#f1f1f1 50%,#dedede);"></div>
<svg class="a" style="left:1912px;top:208px" width="24" height="24" viewBox="0 0 24 24" preserveAspectRatio="none"><path d="M5 23V6" stroke="#e07a10" stroke-width="3.500"/><path d="M0.500 8L5 1l4.500 7z" fill="#e07a10" stroke="#a0500a" stroke-width=".8"/><path d="M11 9h3M11 13h6M11 17h9M11 21h12" stroke="#1a7a1a" stroke-width="2.200"/></svg>
<svg class="a" style="left:1948px;top:219px" width="11" height="6" viewBox="0 0 10 5"><path d="M0 0h10l-5 5z" fill="#000"/></svg>
<div style="left:1967px;top:206px;width:1px;height:27px;background:#8c8c8c;"></div>
<div style="left:1968px;top:206px;width:1px;height:27px;background:#fff;"></div>
<div style="left:1906px;top:240px;width:303px;height:999px;background:#fff;box-sizing:border-box;border:1px solid #828790;"></div>
<span class="t" style="left:1913px;top:240.5px;font:21px/27px 'Liberation Sans',sans-serif;font-weight:bold;color:#000060;">f</span>
<span class="t" style="left:1921px;top:252.0px;font:11px/14px 'Liberation Sans',sans-serif;color:#000060;">(n)</span>
<span class="t" style="left:1944px;top:244.5px;font:16.5px/21px 'Liberation Sans',sans-serif;color:#2a2ad0;transform:scaleX(0.8989);">XmlNode</span>
<span class="t" style="left:1913px;top:264.5px;font:21px/27px 'Liberation Sans',sans-serif;font-weight:bold;color:#000060;">f</span>
<span class="t" style="left:1944px;top:268.5px;font:16.5px/21px 'Liberation Sans',sans-serif;color:#2a2ad0;">hb_Default</span>
<span class="t" style="left:2061px;top:291.5px;font:16.5px/21px 'Liberation Sans',sans-serif;color:#2a902a;transform:scaleX(0.8063);">BF</span>
<span class="t" style="left:2056px;top:388.5px;font:16.5px/21px 'Liberation Sans',sans-serif;color:#1a7ac0;transform:scaleX(0.9432);">Proc</span>
<span class="t" style="left:2061px;top:412.5px;font:16.5px/21px 'Liberation Sans',sans-serif;color:#2a2ad0;transform:scaleX(0.7553);">R</span>
<span class="t" style="left:2062px;top:460.5px;font:16.5px/21px 'Liberation Sans',sans-serif;color:#2a2ad0;transform:scaleX(0.8483);">loXml</span>
<span class="t" style="left:1907px;top:1249.5px;font:16.5px/21px 'Liberation Sans',sans-serif;font-weight:bold;color:#000;transform:scaleX(0.9907);">C_PUTFILE</span>
<span class="t" style="left:1907px;top:1268.5px;font:16.5px/21px 'Liberation Sans',sans-serif;font-weight:bold;color:#000;transform:scaleX(1.0150);">Line:</span>
<span class="t" style="left:1950px;top:1268.5px;font:16.5px/21px 'Liberation Sans',sans-serif;color:#000;transform:scaleX(0.9809);">895</span>
<span class="t" style="left:1907px;top:1288.5px;font:16.5px/21px 'Liberation Sans',sans-serif;font-weight:bold;color:#000;transform:scaleX(1.0247);">Tipo:</span>
<span class="t" style="left:1951px;top:1288.5px;font:16.5px/21px 'Liberation Sans',sans-serif;color:#000;transform:scaleX(0.9798);">Function</span>
<div style="left:1906px;top:1313px;width:303px;height:1px;background:#e8e8e2;"></div>
<div style="left:381px;top:279px;width:1682px;height:795px;border-radius:10px 10px 9px 9px;background:#f3f3f3;box-shadow:0 0 0 1px rgba(110,110,110,.55),0 8px 26px 2px rgba(0,0,0,.30);"></div>
<div class="a" style="left:382px;top:279px;width:1680px;height:794px;border-radius:9px 9px 8px 8px;overflow:hidden;"><div class="a" style="left:-381px;top:-278px;width:2524px;height:1359px;">
<div style="left:381px;top:278px;width:1680px;height:45px;background:#f3f3f3;"></div>
<svg class="a" style="left:393px;top:287px" width="24" height="24" viewBox="0 0 24 24" preserveAspectRatio="none"><rect x="0" y="0" width="24" height="24" fill="#e8ecf8"/><rect x="0" y="14" width="24" height="10" fill="#4a9a8a"/><text x="1" y="11" font-family="Liberation Sans,sans-serif" font-weight="bold" font-size="10.500" fill="#1020c0" textLength="22" lengthAdjust="spacingAndGlyphs">DJS</text><path d="M1 12.500h22" stroke="#1020c0" stroke-width="1"/><text x="1.500" y="21.500" font-family="Liberation Sans,sans-serif" font-weight="bold" font-size="6.500" fill="#102040" textLength="21" lengthAdjust="spacingAndGlyphs">sistema</text><path d="M14 11l-5 12" stroke="#e8d020" stroke-width="1.600"/></svg>
<span class="t" style="left:423px;top:288.5px;font:18px/23px 'Liberation Sans',sans-serif;color:#707070;transform:scaleX(0.9524);">CONTROLE - Sistema de Gestión Comercial</span>
<div style="left:1879px;top:298px;width:15px;height:1px;background:#7a7a7a;"></div>
<div style="left:1949px;top:292px;width:14px;height:14px;box-sizing:border-box;border:1.4px solid #6a6a6a;border-radius:2px;"></div>
<svg class="a" style="left:2018px;top:291px" width="17" height="17" viewBox="0 0 17 17" preserveAspectRatio="none"><path d="M1 1l15 15M16 1L1 16" stroke="#5a5a5a" stroke-width="1.400"/></svg>
<div style="left:381px;top:323px;width:1680px;height:750px;background:#c0c0c0;"></div>
<div style="left:381px;top:323px;width:1680px;height:30px;background:#008080;"></div>
<div style="left:381px;top:353px;width:1680px;height:30px;background:#fff;"></div>
<div style="left:381px;top:413px;width:1680px;height:30px;background:#fff;"></div>
<div style="left:402px;top:413px;width:1638px;height:30px;background:#0000ff;"></div>
<div style="left:402px;top:443px;width:1638px;height:570px;background:#fff;"></div>
<div style="left:2040px;top:443px;width:22px;height:600px;background:#606060;"></div>
<div style="left:445px;top:1013px;width:1617px;height:30px;background:#606060;"></div>
<div style="left:381px;top:1043px;width:1680px;height:30px;background:#000080;"></div>
<div style="left:769px;top:323px;width:2px;height:30px;background:#fff;"></div>
<div style="left:1651px;top:323px;width:2px;height:30px;background:#fff;"></div>
<div style="left:412px;top:443px;width:2px;height:555px;background:#2c2cff;"></div>
<div style="left:2029px;top:443px;width:2px;height:555px;background:#2c2cff;"></div>
<div style="left:412px;top:997px;width:1619px;height:2px;background:#2c2cff;"></div>
<div style="left:423px;top:517px;width:1575px;height:3px;background:#000;"></div>
<div style="left:423px;top:967px;width:1575px;height:3px;background:#000;"></div>
<div style="left:559px;top:518px;width:2px;height:450px;background:#000;"></div>
<div style="left:664px;top:518px;width:2px;height:450px;background:#000;"></div>
<div style="left:423px;top:563px;width:126px;height:30px;background:#000;"></div>
<div style="left:570px;top:563px;width:84px;height:30px;background:#000080;"></div>
<div style="left:675px;top:563px;width:420px;height:30px;background:#000080;"></div>
<div class="c" style="left:801px;top:323px;transform:scaleX(1.2730)"><span style="color:#fff">CONTROLE - Sistema de Gestión Comercial</span></div>
<div class="c" style="left:402px;top:353px;transform:scaleX(1.2730)"><span style="color:#000080">Usuário - </span><span style="color:#800000">DEIVID</span></div>
<div class="c" style="left:1578px;top:353px;transform:scaleX(1.2730)"><span style="color:#000080">Miércoles - 11/10/2023</span></div>
<div class="c" style="left:885px;top:383px;transform:scaleX(1.2730)"><span style="color:#800000">[ COMPEL MATERIALES ELECTRICOS ]</span></div>
<div class="c" style="left:822px;top:413px;transform:scaleX(1.2730)"><span style="color:#fff">* * ORDEN DE COMPRA / COTIZACIONES * *</span></div>
<div class="c" style="left:423px;top:473px;transform:scaleX(1.2730)"><span style="color:#000">Orden  Lote Fecha      Proveedor                 Total C/ IVA  M F Factura</span></div>
<div class="c" style="left:423px;top:533px;transform:scaleX(1.2730)"><span style="color:#000">000001 0000 06/10/</span></div>
<div class="c" style="left:423px;top:563px;transform:scaleX(1.2730)"><span style="color:#ffff00">000002</span><span style="color:#fff"> 0000 </span><span style="color:#fff">22/09/</span></div>
<div class="c" style="left:423px;top:593px;transform:scaleX(1.2730)"><span style="color:#000">000003 0000 15/09/</span></div>
<div class="c" style="left:423px;top:623px;transform:scaleX(1.2730)"><span style="color:#000">000004 0000 15/09/</span></div>
<div class="c" style="left:423px;top:653px;transform:scaleX(1.2730)"><span style="color:#000">000005 0000 14/09/</span></div>
<div class="c" style="left:423px;top:683px;transform:scaleX(1.2730)"><span style="color:#000">000006 0000 13/09/</span></div>
<div class="c" style="left:423px;top:713px;transform:scaleX(1.2730)"><span style="color:#000">000007 0000 13/09/</span></div>
<div class="c" style="left:423px;top:743px;transform:scaleX(1.2730)"><span style="color:#000">000008 0000 09/09/</span></div>
<div class="c" style="left:423px;top:773px;transform:scaleX(1.2730)"><span style="color:#000">000009 0000 09/09/</span></div>
<div class="c" style="left:423px;top:803px;transform:scaleX(1.2730)"><span style="color:#000">000010 0000 06/09/</span></div>
<div class="c" style="left:423px;top:833px;transform:scaleX(1.2730)"><span style="color:#000">000011 0000 14/10/</span></div>
<div class="c" style="left:423px;top:863px;transform:scaleX(1.2730)"><span style="color:#000">000012 0000 14/10/</span></div>
<div class="c" style="left:423px;top:893px;transform:scaleX(1.2730)"><span style="color:#000">000013 0000 14/10/</span></div>
<div class="c" style="left:423px;top:923px;transform:scaleX(1.2730)"><span style="color:#000">000014 0000 20/10/</span></div>
<div class="c" style="left:381px;top:1043px;transform:scaleX(1.2730)"><span style="color:#fff">[F1]AYUDA [I][A][E][</span></div>
</div></div>
<div style="left:794px;top:501px;width:1693px;height:705px;border-radius:11px;background:#191919;box-shadow:0 0 0 1px rgba(70,70,70,.9),0 32px 52px 0 rgba(0,0,0,.58),0 2px 18px rgba(0,0,0,.28);"></div>
<div class="a" style="left:794px;top:501px;width:1693px;height:705px;border-radius:11px;overflow:hidden;"><div class="a" style="left:-794px;top:-500px;width:2524px;height:1359px;">
<div style="left:794px;top:501px;width:1693px;height:46px;background:#202020;"></div>
<div style="left:794px;top:546px;width:1693px;height:1px;background:#3c3c3c;"></div>
<svg class="a" style="left:806px;top:511px" width="23" height="23" viewBox="0 0 24 24" preserveAspectRatio="none"><rect x="0" y="0" width="24" height="24" fill="#e8ecf8"/><rect x="0" y="14" width="24" height="10" fill="#4a9a8a"/><text x="1" y="11" font-family="Liberation Sans,sans-serif" font-weight="bold" font-size="10.500" fill="#1020c0" textLength="22" lengthAdjust="spacingAndGlyphs">DJS</text><path d="M1 12.500h22" stroke="#1020c0" stroke-width="1"/><text x="1.500" y="21.500" font-family="Liberation Sans,sans-serif" font-weight="bold" font-size="6.500" fill="#102040" textLength="21" lengthAdjust="spacingAndGlyphs">sistema</text><path d="M14 11l-5 12" stroke="#e8d020" stroke-width="1.600"/></svg>
<span class="t" style="left:834px;top:510.5px;font:18px/23px 'Liberation Sans',sans-serif;color:#fff;">Importar archivo XML</span>
<svg class="a" style="left:2455px;top:514px" width="17" height="17" viewBox="0 0 17 17" preserveAspectRatio="none"><path d="M1 1l15 15M16 1L1 16" stroke="#fff" stroke-width="1.500"/></svg>
<div style="left:794px;top:547px;width:1693px;height:81px;background:#191919;"></div>
<svg class="a" style="left:814px;top:577px" width="20" height="18" viewBox="0 0 20 18" preserveAspectRatio="none"><path d="M19 9H2M9 1.500L1.500 9l7.500 7.500" fill="none" stroke="#a4a4a4" stroke-width="2.200"/></svg>
<svg class="a" style="left:866px;top:577px" width="20" height="18" viewBox="0 0 20 18" preserveAspectRatio="none"><path d="M1 9h17M11 1.500L18.500 9 11 16.500" fill="none" stroke="#a4a4a4" stroke-width="2.200"/></svg>
<svg class="a" style="left:915px;top:580px" width="15" height="9.642857142857142" viewBox="0 0 14 9" preserveAspectRatio="none"><path d="M1 1.500l6 6 6-6" fill="none" stroke="#a4a4a4" stroke-width="2.2"/></svg>
<svg class="a" style="left:957px;top:576px" width="18" height="20" viewBox="0 0 18 20" preserveAspectRatio="none"><path d="M9 19V2M1.500 9.500L9 2l7.500 7.500" fill="none" stroke="#e8e8e8" stroke-width="2.200"/></svg>
<div style="left:998px;top:560px;width:1150px;height:50px;box-sizing:border-box;border:1px solid #5a5a5a;background:#191919;"></div>
<svg class="a" style="left:1010px;top:571px" width="27" height="22" viewBox="0 0 28 23" preserveAspectRatio="none"><path d="M1 4a2 2 0 0 1 2-2h7l3 3h12a2 2 0 0 1 2 2v2H1z" fill="#e8a92a"/><path d="M1 8a1.500 1.500 0 0 1 1.500-1.500h23a1.500 1.500 0 0 1 1.500 1.500v12.500a2 2 0 0 1-2 2H3a2 2 0 0 1-2-2z" fill="#ffd766"/><path d="M1 19.500v1a2 2 0 0 0 2 2h22a2 2 0 0 0 2-2v-1z" fill="#f2c24a"/></svg>
<svg class="a" style="left:1046px;top:580px" width="7" height="12" viewBox="0 0 9 16" preserveAspectRatio="none"><path d="M1.500 1.500l6 6.500-6 6.500" fill="none" stroke="#f0f0f0" stroke-width="2.6"/></svg>
<span class="t" style="left:1067px;top:574.5px;font:18px/23px 'Liberation Sans',sans-serif;color:#fff;transform:scaleX(0.9924);">Este Computador</span>
<svg class="a" style="left:1219px;top:580px" width="7" height="12" viewBox="0 0 9 16" preserveAspectRatio="none"><path d="M1.500 1.500l6 6.500-6 6.500" fill="none" stroke="#f0f0f0" stroke-width="2.6"/></svg>
<span class="t" style="left:1240px;top:574.5px;font:18px/23px 'Liberation Sans',sans-serif;color:#fff;transform:scaleX(0.8937);">SISTEMA (D:)</span>
<svg class="a" style="left:1355px;top:580px" width="7" height="12" viewBox="0 0 9 16" preserveAspectRatio="none"><path d="M1.500 1.500l6 6.500-6 6.500" fill="none" stroke="#f0f0f0" stroke-width="2.6"/></svg>
<span class="t" style="left:1376px;top:574.5px;font:18px/23px 'Liberation Sans',sans-serif;color:#fff;transform:scaleX(0.9727);">XML</span>
<svg class="a" style="left:2056px;top:583px" width="13" height="8.357142857142858" viewBox="0 0 14 9" preserveAspectRatio="none"><path d="M1 1.500l6 6 6-6" fill="none" stroke="#d0d0d0" stroke-width="1.8"/></svg>
<svg class="a" style="left:2108px;top:576px" width="20" height="21" viewBox="0 0 20 21" preserveAspectRatio="none"><path d="M16.500 5.500A8 8 0 1 0 18 11" fill="none" stroke="#e0e0e0" stroke-width="1.800"/><path d="M11.500 5.500h5.500V0.500" fill="none" stroke="#e0e0e0" stroke-width="1.800"/></svg>
<div style="left:2167px;top:560px;width:303px;height:50px;box-sizing:border-box;border:1px solid #5a5a5a;background:#191919;"></div>
<span class="t" style="left:2180px;top:574.5px;font:18px/23px 'Liberation Sans',sans-serif;color:#8c8c8c;transform:scaleX(0.9536);">Pesquisar em XML</span>
<svg class="a" style="left:2429px;top:577px" width="19" height="19" viewBox="0 0 19 19" preserveAspectRatio="none"><circle cx="12" cy="7" r="4.800" fill="none" stroke="#bcbcbc" stroke-width="2.400"/><path d="M8.500 10.500L1.500 17.500" stroke="#bcbcbc" stroke-width="2.600"/></svg>
<div style="left:794px;top:628px;width:1693px;height:44px;background:#202020;"></div>
<span class="t" style="left:820px;top:639.5px;font:18px/23px 'Liberation Sans',sans-serif;color:#fff;transform:scaleX(0.9617);">Organizar</span>
<svg class="a" style="left:904px;top:647px" width="14" height="7.5" viewBox="0 0 10 5"><path d="M0 0h10l-5 5z" fill="#d8d8d8"/></svg>
<span class="t" style="left:963px;top:639.5px;font:18px/23px 'Liberation Sans',sans-serif;color:#fff;transform:scaleX(0.9665);">Nova pasta</span>
<svg class="a" style="left:2304px;top:638px" width="25" height="25" viewBox="0 0 25 25" preserveAspectRatio="none"><rect x="0.500" y="0.500" width="24" height="24" rx="2.500" fill="#c6c6c6"/><path d="M3.500 5.500h18M3.500 10h18M3.500 14.500h18M3.500 19h18" stroke="#151515" stroke-width="2.200"/></svg>
<svg class="a" style="left:2343px;top:648px" width="13" height="7" viewBox="0 0 10 5"><path d="M0 0h10l-5 5z" fill="#d0d0d0"/></svg>
<svg class="a" style="left:2386px;top:638px" width="26" height="25" viewBox="0 0 26 25" preserveAspectRatio="none"><rect x="0.500" y="0.500" width="25" height="24" rx="3" fill="#c4c4c4"/><rect x="2.500" y="3" width="21" height="19" rx="1" fill="#111"/><rect x="4" y="4.500" width="10" height="16" fill="#fff"/><rect x="14" y="4.500" width="8" height="16" fill="#1a86e8"/></svg>
<div style="left:2440px;top:639px;width:24px;height:24px;border-radius:12px;background:#1a8cf0;"></div>
<span class="t" style="left:2448px;top:641.0px;font:15px/20px 'Liberation Sans',sans-serif;font-weight:bold;color:#fff;">?</span>
<div style="left:794px;top:672px;width:1693px;height:421px;background:#191919;"></div>
<div style="left:1067px;top:674px;width:2px;height:419px;background:#2a2a2a;"></div>
<svg class="a" style="left:843px;top:686px" width="27" height="22" viewBox="0 0 28 23" preserveAspectRatio="none"><path d="M1 4a2 2 0 0 1 2-2h7l3 3h12a2 2 0 0 1 2 2v2H1z" fill="#e8a92a"/><path d="M1 8a1.500 1.500 0 0 1 1.500-1.500h23a1.500 1.500 0 0 1 1.500 1.500v12.500a2 2 0 0 1-2 2H3a2 2 0 0 1-2-2z" fill="#ffd766"/><path d="M1 19.500v1a2 2 0 0 0 2 2h22a2 2 0 0 0 2-2v-1z" fill="#f2c24a"/></svg>
<span class="t" style="left:875px;top:686.5px;font:18px/23px 'Liberation Sans',sans-serif;color:#fff;transform:scaleX(0.8460);">PRG</span>
<svg class="a" style="left:843px;top:734px" width="27" height="22" viewBox="0 0 28 23" preserveAspectRatio="none"><path d="M1 4a2 2 0 0 1 2-2h7l3 3h12a2 2 0 0 1 2 2v2H1z" fill="#e8a92a"/><path d="M1 8a1.500 1.500 0 0 1 1.500-1.500h23a1.500 1.500 0 0 1 1.500 1.500v12.500a2 2 0 0 1-2 2H3a2 2 0 0 1-2-2z" fill="#ffd766"/><path d="M1 19.500v1a2 2 0 0 0 2 2h22a2 2 0 0 0 2-2v-1z" fill="#f2c24a"/></svg>
<span class="t" style="left:875px;top:734.5px;font:18px/23px 'Liberation Sans',sans-serif;color:#fff;transform:scaleX(0.9258);">PEDIDOS CHINA 202</span>
<svg class="a" style="left:843px;top:782px" width="27" height="22" viewBox="0 0 28 23" preserveAspectRatio="none"><path d="M1 4a2 2 0 0 1 2-2h7l3 3h12a2 2 0 0 1 2 2v2H1z" fill="#e8a92a"/><path d="M1 8a1.500 1.500 0 0 1 1.500-1.500h23a1.500 1.500 0 0 1 1.500 1.500v12.500a2 2 0 0 1-2 2H3a2 2 0 0 1-2-2z" fill="#ffd766"/><path d="M1 19.500v1a2 2 0 0 0 2 2h22a2 2 0 0 0 2-2v-1z" fill="#f2c24a"/></svg>
<span class="t" style="left:875px;top:782.5px;font:18px/23px 'Liberation Sans',sans-serif;color:#fff;transform:scaleX(0.9727);">XML</span>
<div style="left:808px;top:843px;width:221px;height:1px;background:#3a3a3a;"></div>
<div style="left:797px;top:963px;width:242px;height:48px;background:#343434;border-radius:3px;"></div>
<svg class="a" style="left:811px;top:886px" width="14" height="9.0" viewBox="0 0 14 9" preserveAspectRatio="none"><path d="M1 1.500l6 6 6-6" fill="none" stroke="#d0d0d0" stroke-width="2.2"/></svg>
<svg class="a" style="left:843px;top:879px" width="27" height="25" viewBox="0 0 27 25" preserveAspectRatio="none"><rect x="1" y="1" width="25" height="17" rx="1.500" fill="#2ab4f0"/><path d="M1 10l25-9v17H1z" fill="#1a9ae0" opacity=".5"/><rect x="11" y="18" width="5" height="4" fill="#9ab0c0"/><rect x="7" y="21.500" width="13" height="2" fill="#c8d4dc"/></svg>
<span class="t" style="left:875px;top:878.5px;font:18px/23px 'Liberation Sans',sans-serif;color:#fff;transform:scaleX(0.9924);">Este Computador</span>
<svg class="a" style="left:825px;top:930px" width="9" height="16" viewBox="0 0 9 16" preserveAspectRatio="none"><path d="M1.500 1.500l6 6.500-6 6.500" fill="none" stroke="#9a9a9a" stroke-width="2.3"/></svg>
<svg class="a" style="left:855px;top:926px" width="25" height="20" viewBox="0 0 25 20" preserveAspectRatio="none"><path d="M4 8h17l3 5H1z" fill="#d8d8d8"/><rect x="1" y="13" width="23" height="6" rx="1" fill="#f4f4f4"/><rect x="1" y="16.500" width="23" height="2.500" fill="#b8b8b8"/><rect x="3.500" y="14.500" width="3" height="1.500" fill="#3ac03a"/><rect x="1" y="0" width="4.200" height="4.200" fill="#2a9af0"/><rect x="6.200" y="0" width="4.200" height="4.200" fill="#2a9af0"/><rect x="1" y="5.200" width="4.200" height="4.200" fill="#2a9af0"/><rect x="6.200" y="5.200" width="4.200" height="4.200" fill="#2a9af0"/></svg>
<span class="t" style="left:887px;top:926.5px;font:18px/23px 'Liberation Sans',sans-serif;color:#fff;transform:scaleX(0.9607);">Disco Local (C:)</span>
<svg class="a" style="left:825px;top:978px" width="9" height="16" viewBox="0 0 9 16" preserveAspectRatio="none"><path d="M1.500 1.500l6 6.500-6 6.500" fill="none" stroke="#9a9a9a" stroke-width="2.3"/></svg>
<svg class="a" style="left:855px;top:974px" width="25" height="20" viewBox="0 0 25 20" preserveAspectRatio="none"><path d="M4 8h17l3 5H1z" fill="#d8d8d8"/><rect x="1" y="13" width="23" height="6" rx="1" fill="#f4f4f4"/><rect x="1" y="16.500" width="23" height="2.500" fill="#b8b8b8"/><rect x="3.500" y="14.500" width="3" height="1.500" fill="#3ac03a"/></svg>
<span class="t" style="left:887px;top:974.5px;font:18px/23px 'Liberation Sans',sans-serif;color:#fff;transform:scaleX(0.8937);">SISTEMA (D:)</span>
<svg class="a" style="left:825px;top:1026px" width="9" height="16" viewBox="0 0 9 16" preserveAspectRatio="none"><path d="M1.500 1.500l6 6.500-6 6.500" fill="none" stroke="#9a9a9a" stroke-width="2.3"/></svg>
<svg class="a" style="left:855px;top:1022px" width="25" height="20" viewBox="0 0 25 20" preserveAspectRatio="none"><path d="M4 8h17l3 5H1z" fill="#d8d8d8"/><rect x="1" y="13" width="23" height="6" rx="1" fill="#f4f4f4"/><rect x="1" y="16.500" width="23" height="2.500" fill="#b8b8b8"/><rect x="3.500" y="14.500" width="3" height="1.500" fill="#3ac03a"/></svg>
<span class="t" style="left:887px;top:1022.5px;font:18px/23px 'Liberation Sans',sans-serif;color:#fff;transform:scaleX(0.9007);">BACKUP (E:)</span>
<svg class="a" style="left:813px;top:1074px" width="9" height="16" viewBox="0 0 9 16" preserveAspectRatio="none"><path d="M1.500 1.500l6 6.500-6 6.500" fill="none" stroke="#9a9a9a" stroke-width="2.3"/></svg>
<svg class="a" style="left:843px;top:1069px" width="27" height="24" viewBox="0 0 27 24" preserveAspectRatio="none"><rect x="6" y="7" width="20" height="13" rx="1.500" fill="#2ab4f0"/><circle cx="7" cy="7" r="6.500" fill="#7ad0f4"/><path d="M3 4c3 1 5 3 4 7M1 8h12" stroke="#e8f8ff" stroke-width="1.200" fill="none"/><rect x="13" y="20" width="4" height="4" fill="#c8d4dc"/></svg>
<span class="t" style="left:875px;top:1070.5px;font:18px/23px 'Liberation Sans',sans-serif;color:#fff;transform:scaleX(0.9064);">Rede</span>
<div style="left:1051px;top:883px;width:3px;height:174px;background:#8a8a8a;border-radius:2px;"></div>
<span class="t" style="left:1116px;top:682.5px;font:18px/23px 'Liberation Sans',sans-serif;color:#dedede;transform:scaleX(1.0206);">Nome</span>
<svg class="a" style="left:1389px;top:677px" width="12" height="7" viewBox="0 0 12 7" preserveAspectRatio="none"><path d="M1 6l5-5 5 5" fill="none" stroke="#a0a0a0" stroke-width="1.400"/></svg>
<div style="left:1684px;top:676px;width:1px;height:36px;background:#6a6a6a;"></div>
<div style="left:1899px;top:676px;width:1px;height:36px;background:#6a6a6a;"></div>
<div style="left:2079px;top:676px;width:1px;height:36px;background:#6a6a6a;"></div>
<div style="left:2200px;top:676px;width:1px;height:36px;background:#6a6a6a;"></div>
<span class="t" style="left:1695px;top:682.5px;font:18px/23px 'Liberation Sans',sans-serif;color:#dedede;transform:scaleX(0.9934);">Data de modificação</span>
<span class="t" style="left:1910px;top:682.5px;font:18px/23px 'Liberation Sans',sans-serif;color:#dedede;transform:scaleX(0.9899);">Tipo</span>
<span class="t" style="left:2090px;top:682.5px;font:18px/23px 'Liberation Sans',sans-serif;color:#dedede;transform:scaleX(0.9859);">Tamanho</span>
<svg class="a" style="left:1099px;top:730px" width="18" height="23" viewBox="0 0 18 23" preserveAspectRatio="none"><path d="M1 1h10l6 6v15H1z" fill="#fff"/><path d="M11 1v6h6z" fill="#c8c8c8"/></svg>
<span class="t" style="left:1127px;top:730.5px;font:18px/23px 'Liberation Sans',sans-serif;color:#fff;transform:scaleX(0.9198);">43230488674080000101550010006648281567859170-nfe.xml</span>
<span class="t" style="left:1695px;top:730.5px;font:18px/23px 'Liberation Sans',sans-serif;color:#fff;transform:scaleX(0.9439);">11/09/2023 16:57</span>
<span class="t" style="left:1910px;top:730.5px;font:18px/23px 'Liberation Sans',sans-serif;color:#fff;transform:scaleX(1.0784);">xmlfile</span>
<span class="t" style="left:2155px;top:730.5px;font:18px/23px 'Liberation Sans',sans-serif;color:#fff;transform:scaleX(0.8713);">9 KB</span>
<svg class="a" style="left:1099px;top:776px" width="18" height="23" viewBox="0 0 18 23" preserveAspectRatio="none"><path d="M1 1h10l6 6v15H1z" fill="#fff"/><path d="M11 1v6h6z" fill="#c8c8c8"/></svg>
<span class="t" style="left:1127px;top:776.5px;font:18px/23px 'Liberation Sans',sans-serif;color:#fff;transform:scaleX(0.9198);">43230888674080000101550010006912831568124957-nfe.xml</span>
<span class="t" style="left:1695px;top:776.5px;font:18px/23px 'Liberation Sans',sans-serif;color:#fff;transform:scaleX(0.9439);">11/09/2023 13:13</span>
<span class="t" style="left:1910px;top:776.5px;font:18px/23px 'Liberation Sans',sans-serif;color:#fff;transform:scaleX(1.0784);">xmlfile</span>
<span class="t" style="left:2146px;top:776.5px;font:18px/23px 'Liberation Sans',sans-serif;color:#fff;transform:scaleX(0.9015);">11 KB</span>
<svg class="a" style="left:1099px;top:823px" width="18" height="23" viewBox="0 0 18 23" preserveAspectRatio="none"><path d="M1 1h10l6 6v15H1z" fill="#fff"/><path d="M11 1v6h6z" fill="#c8c8c8"/></svg>
<span class="t" style="left:1127px;top:823.5px;font:18px/23px 'Liberation Sans',sans-serif;color:#fff;transform:scaleX(1.0450);">Arqxml.xml</span>
<span class="t" style="left:1695px;top:823.5px;font:18px/23px 'Liberation Sans',sans-serif;color:#fff;transform:scaleX(0.9439);">11/09/2023 13:13</span>
<span class="t" style="left:1910px;top:823.5px;font:18px/23px 'Liberation Sans',sans-serif;color:#fff;transform:scaleX(1.0784);">xmlfile</span>
<span class="t" style="left:2155px;top:823.5px;font:18px/23px 'Liberation Sans',sans-serif;color:#fff;transform:scaleX(0.8713);">9 KB</span>
<div style="left:794px;top:1093px;width:1693px;height:113px;background:#383838;"></div>
<span class="t" style="left:988px;top:1112.5px;font:18px/23px 'Liberation Sans',sans-serif;color:#fff;"><u>N</u>ome:</span>
<div style="left:1049px;top:1106px;width:1113px;height:36px;box-sizing:border-box;border:2px solid #f4f4f4;background:#383838;"></div>
<div style="left:1056px;top:1111px;width:1px;height:26px;background:#fff;"></div>
<svg class="a" style="left:2142px;top:1121px" width="12" height="7.714285714285714" viewBox="0 0 14 9" preserveAspectRatio="none"><path d="M1 1.500l6 6 6-6" fill="none" stroke="#d0d0d0" stroke-width="1.8"/></svg>
<div style="left:2180px;top:1106px;width:282px;height:34px;box-sizing:border-box;border:1px solid #9a9a9a;background:#383838;"></div>
<span class="t" style="left:2187px;top:1112.5px;font:18px/23px 'Liberation Sans',sans-serif;color:#fff;transform:scaleX(0.9817);">Archivos XML</span>
<svg class="a" style="left:2442px;top:1120px" width="12" height="7.714285714285714" viewBox="0 0 14 9" preserveAspectRatio="none"><path d="M1 1.500l6 6 6-6" fill="none" stroke="#d0d0d0" stroke-width="1.8"/></svg>
<div style="left:2182px;top:1151px;width:129px;height:36px;box-sizing:border-box;border:2px solid #f4f4f4;border-radius:6px;background:#333;"></div>
<span class="t" style="left:2214px;top:1157.5px;font:18px/23px 'Liberation Sans',sans-serif;color:#fff;transform:scaleX(1.0526);">A<u>b</u>rir</span>
<div style="left:2289px;top:1156px;width:1px;height:26px;background:#c8c8c8;"></div>
<svg class="a" style="left:2293px;top:1166px" width="12" height="7" viewBox="0 0 10 5"><path d="M0 0h10l-5 5z" fill="#e0e0e0"/></svg>
<div style="left:2332px;top:1151px;width:129px;height:36px;box-sizing:border-box;border:1px solid #9a9a9a;border-radius:6px;background:#333;"></div>
<span class="t" style="left:2362px;top:1157.5px;font:18px/23px 'Liberation Sans',sans-serif;color:#fff;transform:scaleX(0.9579);">Cancelar</span>
<div style="left:2478px;top:1199px;width:2px;height:2px;background:#b0b0b0;"></div>
<div style="left:2474px;top:1199px;width:2px;height:2px;background:#b0b0b0;"></div>
<div style="left:2470px;top:1199px;width:2px;height:2px;background:#b0b0b0;"></div>
<div style="left:2478px;top:1195px;width:2px;height:2px;background:#b0b0b0;"></div>
<div style="left:2474px;top:1195px;width:2px;height:2px;background:#b0b0b0;"></div>
<div style="left:2478px;top:1191px;width:2px;height:2px;background:#b0b0b0;"></div>
</div></div>
</body></html>
